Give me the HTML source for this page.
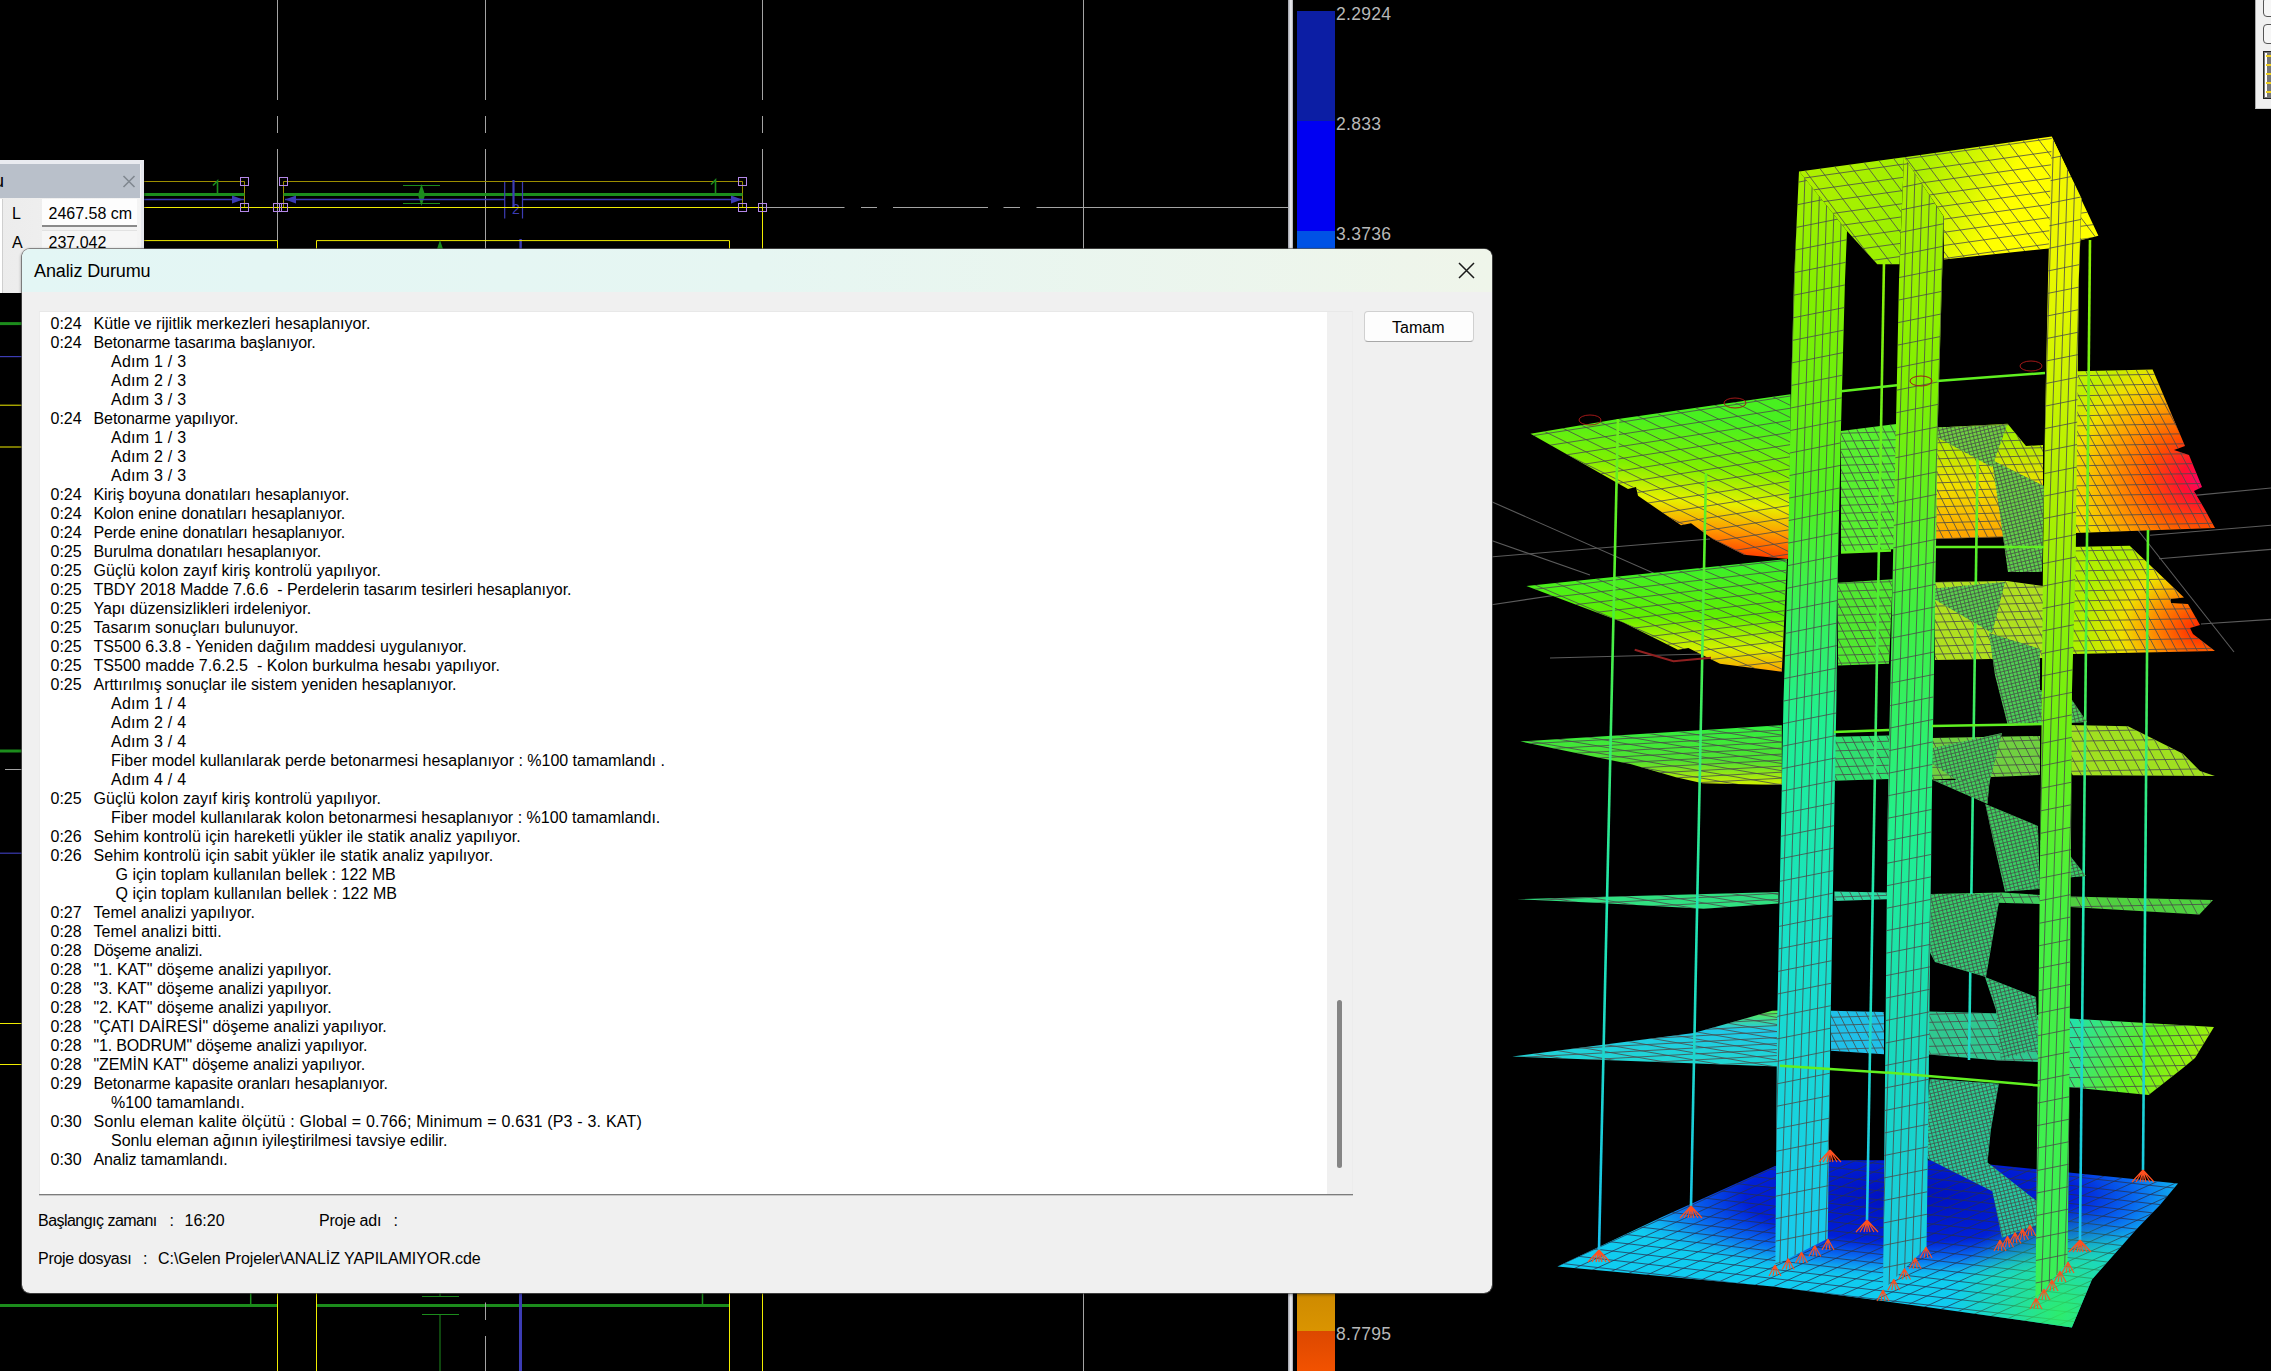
<!DOCTYPE html>
<html><head><meta charset="utf-8"><style>
*{margin:0;padding:0;box-sizing:border-box}
html,body{width:2271px;height:1371px;overflow:hidden;background:#000}
body{position:relative;font-family:"Liberation Sans",sans-serif;font-size:16px;color:#000}
.abs{position:absolute}
.ln{position:absolute;line-height:19px;white-space:pre;font-size:16px;color:#000}
svg{position:absolute;left:0;top:0}
</style></head>
<body>
<svg width="2271" height="1371" viewBox="0 0 2271 1371" style="left:0;top:0"><line x1="277.5" y1="0" x2="277.5" y2="100" stroke="#a4a4a4" stroke-width="1"/><line x1="277.5" y1="116" x2="277.5" y2="133" stroke="#a4a4a4" stroke-width="1"/><line x1="277.5" y1="149" x2="277.5" y2="249" stroke="#a4a4a4" stroke-width="1"/><line x1="485.5" y1="0" x2="485.5" y2="100" stroke="#a4a4a4" stroke-width="1"/><line x1="485.5" y1="116" x2="485.5" y2="133" stroke="#a4a4a4" stroke-width="1"/><line x1="485.5" y1="149" x2="485.5" y2="249" stroke="#a4a4a4" stroke-width="1"/><line x1="762.5" y1="0" x2="762.5" y2="100" stroke="#a4a4a4" stroke-width="1"/><line x1="762.5" y1="116" x2="762.5" y2="133" stroke="#a4a4a4" stroke-width="1"/><line x1="762.5" y1="149" x2="762.5" y2="207.5" stroke="#a4a4a4" stroke-width="1"/><line x1="1083.5" y1="0" x2="1083.5" y2="249" stroke="#a4a4a4" stroke-width="1"/><line x1="762" y1="207.5" x2="844.5" y2="207.5" stroke="#a4a4a4" stroke-width="1"/><line x1="861" y1="207.5" x2="877" y2="207.5" stroke="#a4a4a4" stroke-width="1"/><line x1="893" y1="207.5" x2="988" y2="207.5" stroke="#a4a4a4" stroke-width="1"/><line x1="1003.5" y1="207.5" x2="1020" y2="207.5" stroke="#a4a4a4" stroke-width="1"/><line x1="1036.5" y1="207.5" x2="1288" y2="207.5" stroke="#a4a4a4" stroke-width="1"/><line x1="143" y1="181.5" x2="244.5" y2="181.5" stroke="#9c8e00" stroke-width="1"/><line x1="283.5" y1="181.5" x2="742.5" y2="181.5" stroke="#9c8e00" stroke-width="1"/><line x1="244.5" y1="181.5" x2="244.5" y2="207.5" stroke="#9c8e00" stroke-width="1"/><line x1="283.5" y1="181.5" x2="283.5" y2="207.5" stroke="#9c8e00" stroke-width="1"/><line x1="742.5" y1="181.5" x2="742.5" y2="207.5" stroke="#9c8e00" stroke-width="1"/><line x1="143" y1="194.5" x2="244.5" y2="194.5" stroke="#1c8c1c" stroke-width="3"/><line x1="283.5" y1="194.5" x2="742.5" y2="194.5" stroke="#1c8c1c" stroke-width="3"/><path d="M213 185.5L217.5 181V194M711 184.5L715.5 180V194" stroke="#1c8c1c" stroke-width="1.6" fill="none"/><path d="M421.5 184 L425 195 L421.5 206 L418 195 Z" fill="#1c8c1c"/><line x1="403" y1="185.5" x2="440" y2="185.5" stroke="#1c8c1c" stroke-width="1"/><line x1="403" y1="203.5" x2="440" y2="203.5" stroke="#1c8c1c" stroke-width="1"/><line x1="143" y1="199.5" x2="244" y2="199.5" stroke="#3c3cb4" stroke-width="1.5"/><line x1="285" y1="199.5" x2="505" y2="199.5" stroke="#3c3cb4" stroke-width="1.5"/><line x1="522.5" y1="199.5" x2="742" y2="199.5" stroke="#3c3cb4" stroke-width="1.5"/><path d="M232 195.5 L243 199.5 L232 203.5 Z" fill="#3c3cb4"/><path d="M296 195.5 L285 199.5 L296 203.5 Z" fill="#3c3cb4"/><path d="M731 195.5 L742 199.5 L731 203.5 Z" fill="#3c3cb4"/><line x1="504.7" y1="182" x2="504.7" y2="218.5" stroke="#3c3cb4" stroke-width="1.2"/><line x1="522.5" y1="182" x2="522.5" y2="218.5" stroke="#3c3cb4" stroke-width="1.2"/><line x1="513.5" y1="180" x2="513.5" y2="207" stroke="#3c3cb4" stroke-width="2.2"/><text x="512" y="214" font-family="Liberation Sans" font-size="14" fill="#3c3cb4">2</text><line x1="520.6" y1="239" x2="520.6" y2="249" stroke="#3c3cb4" stroke-width="2.5"/><line x1="143" y1="207.5" x2="762.5" y2="207.5" stroke="#f0ec00" stroke-width="1"/><line x1="762.5" y1="207.5" x2="762.5" y2="249" stroke="#f0ec00" stroke-width="1"/><line x1="143" y1="240.6" x2="277.5" y2="240.6" stroke="#f0ec00" stroke-width="1"/><line x1="277.5" y1="240.6" x2="277.5" y2="249" stroke="#f0ec00" stroke-width="1"/><line x1="316.5" y1="240.6" x2="729.5" y2="240.6" stroke="#f0ec00" stroke-width="1"/><line x1="316.5" y1="240.6" x2="316.5" y2="249" stroke="#f0ec00" stroke-width="1"/><line x1="729.5" y1="240.6" x2="729.5" y2="249" stroke="#f0ec00" stroke-width="1"/><path d="M440 240 L443 249 L437 249 Z" fill="#1c8c1c"/><rect x="240.5" y="177.5" width="8" height="8" fill="none" stroke="#b488e8" stroke-width="1"/><rect x="240.5" y="203.5" width="8" height="8" fill="none" stroke="#b488e8" stroke-width="1"/><rect x="279.5" y="177.5" width="8" height="8" fill="none" stroke="#b488e8" stroke-width="1"/><rect x="279.5" y="203.5" width="8" height="8" fill="none" stroke="#b488e8" stroke-width="1"/><rect x="273.5" y="203.5" width="8" height="8" fill="none" stroke="#b488e8" stroke-width="1"/><rect x="738.5" y="177.5" width="8" height="8" fill="none" stroke="#b488e8" stroke-width="1"/><rect x="738.5" y="203.5" width="8" height="8" fill="none" stroke="#b488e8" stroke-width="1"/><rect x="758.5" y="203.5" width="8" height="8" fill="none" stroke="#b488e8" stroke-width="1"/><line x1="0" y1="323.6" x2="22" y2="323.6" stroke="#1c8c1c" stroke-width="3"/><line x1="0" y1="356.6" x2="22" y2="356.6" stroke="#3c3cb4" stroke-width="1.2"/><line x1="0" y1="405.2" x2="22" y2="405.2" stroke="#f0ec00" stroke-width="1"/><line x1="0" y1="447" x2="22" y2="447" stroke="#f0ec00" stroke-width="1"/><line x1="0" y1="751" x2="22" y2="751" stroke="#1c8c1c" stroke-width="3"/><line x1="0" y1="853.2" x2="22" y2="853.2" stroke="#3c3cb4" stroke-width="1.2"/><line x1="0" y1="1023.5" x2="22" y2="1023.5" stroke="#f0ec00" stroke-width="1"/><line x1="0" y1="1064.5" x2="22" y2="1064.5" stroke="#f0ec00" stroke-width="1"/><line x1="5" y1="769.5" x2="22" y2="769.5" stroke="#a4a4a4" stroke-width="1"/><line x1="0" y1="1305.5" x2="277.5" y2="1305.5" stroke="#1c8c1c" stroke-width="3"/><line x1="316" y1="1305.5" x2="730" y2="1305.5" stroke="#1c8c1c" stroke-width="3"/><line x1="250.7" y1="1293" x2="250.7" y2="1305" stroke="#1c8c1c" stroke-width="1.5"/><line x1="702.5" y1="1293" x2="702.5" y2="1305" stroke="#1c8c1c" stroke-width="1.5"/><line x1="277.5" y1="1293" x2="277.5" y2="1371" stroke="#f0ec00" stroke-width="1"/><line x1="316.5" y1="1293" x2="316.5" y2="1371" stroke="#f0ec00" stroke-width="1"/><line x1="729.5" y1="1293" x2="729.5" y2="1371" stroke="#f0ec00" stroke-width="1"/><line x1="762.5" y1="1293" x2="762.5" y2="1371" stroke="#f0ec00" stroke-width="1"/><line x1="440" y1="1314" x2="440" y2="1371" stroke="#1c8c1c" stroke-width="1"/><line x1="422" y1="1296.5" x2="459" y2="1296.5" stroke="#1c8c1c" stroke-width="1"/><line x1="422" y1="1314.5" x2="459" y2="1314.5" stroke="#1c8c1c" stroke-width="1"/><line x1="440" y1="1293" x2="440" y2="1297" stroke="#1c8c1c" stroke-width="1"/><line x1="485.5" y1="1302.5" x2="485.5" y2="1320" stroke="#a4a4a4" stroke-width="1"/><line x1="485.5" y1="1336" x2="485.5" y2="1371" stroke="#a4a4a4" stroke-width="1"/><line x1="520.5" y1="1293" x2="520.5" y2="1371" stroke="#3c3cb4" stroke-width="3"/><line x1="1083.5" y1="1293" x2="1083.5" y2="1371" stroke="#a4a4a4" stroke-width="1"/><defs><linearGradient id="gWallL" gradientUnits="userSpaceOnUse" x1="0" y1="170" x2="0" y2="1270"><stop offset="0" stop-color="#a8f000"/><stop offset="0.12" stop-color="#80f000"/><stop offset="0.3" stop-color="#50f020"/><stop offset="0.5" stop-color="#20f090"/><stop offset="0.7" stop-color="#18e0c8"/><stop offset="1" stop-color="#18c8f0"/></linearGradient><linearGradient id="gWallM" gradientUnits="userSpaceOnUse" x1="0" y1="157" x2="0" y2="1290"><stop offset="0" stop-color="#b0f000"/><stop offset="0.2" stop-color="#80f000"/><stop offset="0.4" stop-color="#40f040"/><stop offset="0.6" stop-color="#20f090"/><stop offset="0.8" stop-color="#18d8c0"/><stop offset="1" stop-color="#18c8e8"/></linearGradient><linearGradient id="gWallR" gradientUnits="userSpaceOnUse" x1="0" y1="137" x2="0" y2="1298"><stop offset="0" stop-color="#f8f800"/><stop offset="0.12" stop-color="#e8f800"/><stop offset="0.3" stop-color="#b0f000"/><stop offset="0.5" stop-color="#70f010"/><stop offset="0.66" stop-color="#48f040"/><stop offset="1" stop-color="#38f058"/></linearGradient><linearGradient id="gS5L" gradientUnits="userSpaceOnUse" x1="1700" y1="420" x2="1690" y2="556"><stop offset="0" stop-color="#48f020"/><stop offset="0.35" stop-color="#80f000"/><stop offset="0.6" stop-color="#e8f000"/><stop offset="0.8" stop-color="#ff9800"/><stop offset="1" stop-color="#ff3000"/></linearGradient><radialGradient id="gS5R" gradientUnits="userSpaceOnUse" cx="2205" cy="480" r="160" gradientTransform="translate(2205 480) scale(1 0.85) translate(-2205 -480)"><stop offset="0" stop-color="#ff0070"/><stop offset="0.15" stop-color="#ff1030"/><stop offset="0.35" stop-color="#ff5000"/><stop offset="0.6" stop-color="#ffa000"/><stop offset="0.82" stop-color="#f0e000"/><stop offset="1" stop-color="#c0f000"/></radialGradient><linearGradient id="gS5M" gradientUnits="userSpaceOnUse" x1="1930" y1="430" x2="1930" y2="540"><stop offset="0" stop-color="#a0f000"/><stop offset="0.5" stop-color="#f0e000"/><stop offset="1" stop-color="#ffa000"/></linearGradient><linearGradient id="gS4L" gradientUnits="userSpaceOnUse" x1="1650" y1="560" x2="1650" y2="672"><stop offset="0" stop-color="#38f030"/><stop offset="0.5" stop-color="#60f000"/><stop offset="0.8" stop-color="#d8f000"/><stop offset="1" stop-color="#ffa000"/></linearGradient><radialGradient id="gS4R" gradientUnits="userSpaceOnUse" cx="2200" cy="630" r="120" gradientTransform="translate(2200 630) scale(1 0.8) translate(-2200 -630)"><stop offset="0" stop-color="#ff2000"/><stop offset="0.35" stop-color="#ff8000"/><stop offset="0.65" stop-color="#f0e000"/><stop offset="1" stop-color="#b0f000"/></radialGradient><linearGradient id="gS3" gradientUnits="userSpaceOnUse" x1="1650" y1="725" x2="1650" y2="785"><stop offset="0" stop-color="#30f040"/><stop offset="0.6" stop-color="#50e030"/><stop offset="1" stop-color="#d0f000"/></linearGradient><linearGradient id="gS1L" gradientUnits="userSpaceOnUse" x1="1650" y1="1010" x2="1650" y2="1066"><stop offset="0" stop-color="#60f040"/><stop offset="0.35" stop-color="#20c8e8"/><stop offset="1" stop-color="#20d8d0"/></linearGradient><linearGradient id="gS1R" gradientUnits="userSpaceOnUse" x1="2070" y1="1018" x2="2210" y2="1095"><stop offset="0" stop-color="#20e0b0"/><stop offset="0.5" stop-color="#60f020"/><stop offset="1" stop-color="#c0f000"/></linearGradient><radialGradient id="gBase" gradientUnits="userSpaceOnUse" cx="1910" cy="1195" r="300" gradientTransform="translate(1910 1195) scale(1 0.28) translate(-1910 -1195)"><stop offset="0" stop-color="#0010c0"/><stop offset="0.55" stop-color="#0020d8"/><stop offset="0.75" stop-color="#0868f0"/><stop offset="0.9" stop-color="#10b0f0"/><stop offset="1" stop-color="#10ccf0"/></radialGradient><linearGradient id="gCol" gradientUnits="userSpaceOnUse" x1="0" y1="230" x2="0" y2="1260"><stop offset="0" stop-color="#90f000"/><stop offset="0.35" stop-color="#50f030"/><stop offset="0.65" stop-color="#20e8b0"/><stop offset="1" stop-color="#18c0f0"/></linearGradient><linearGradient id="gRoofL" gradientUnits="userSpaceOnUse" x1="1800" y1="170" x2="1900" y2="260"><stop offset="0" stop-color="#b0f000"/><stop offset="1" stop-color="#98f000"/></linearGradient><linearGradient id="gRoofR" gradientUnits="userSpaceOnUse" x1="1920" y1="160" x2="2090" y2="240"><stop offset="0" stop-color="#a8f000"/><stop offset="0.3" stop-color="#d8f800"/><stop offset="0.5" stop-color="#ffff00"/><stop offset="1" stop-color="#ffff00"/></linearGradient><linearGradient id="gStair" gradientUnits="userSpaceOnUse" x1="0" y1="420" x2="0" y2="1280"><stop offset="0" stop-color="#70d040"/><stop offset="0.5" stop-color="#38d060"/><stop offset="1" stop-color="#20c8b0"/></linearGradient></defs><line x1="1490" y1="501" x2="1760" y2="620" stroke="#5c5c5c" stroke-width="1.1" /><line x1="1490" y1="540" x2="1590" y2="575" stroke="#5c5c5c" stroke-width="1.1" /><line x1="1490" y1="557" x2="1710" y2="539" stroke="#5c5c5c" stroke-width="1.1" /><line x1="1490" y1="605" x2="1590" y2="590" stroke="#5c5c5c" stroke-width="1.1" /><line x1="2192" y1="495.6" x2="2271" y2="488" stroke="#5c5c5c" stroke-width="1.1" /><line x1="2150" y1="535.3" x2="2271" y2="525.3" stroke="#5c5c5c" stroke-width="1.1" /><line x1="2159" y1="558.7" x2="2271" y2="549.4" stroke="#5c5c5c" stroke-width="1.1" /><line x1="2201" y1="624" x2="2271" y2="619.4" stroke="#5c5c5c" stroke-width="1.1" /><line x1="2130" y1="520" x2="2234" y2="652" stroke="#5c5c5c" stroke-width="1.1" /><line x1="1550" y1="658" x2="1780" y2="652" stroke="#5c5c5c" stroke-width="1.1" /><polygon points="1557.4,1266.4 1662,1217 1775,1166 1827.7,1160.3 1946.9,1160.3 2034,1169 2178,1183.6 2160,1205 2135.8,1230 2092,1279.5 2071.8,1327.4 1883,1301 1775.4,1286.8" fill="url(#gBase)" /><clipPath id="c1"><polygon points="1557.4,1266.4 1662,1217 1775,1166 1827.7,1160.3 1946.9,1160.3 2034,1169 2178,1183.6 2160,1205 2135.8,1230 2092,1279.5 2071.8,1327.4 1883,1301 1775.4,1286.8"/></clipPath><path clip-path="url(#c1)" d="M1439.3 1082.7L2028.0 815.1M1443.0 1090.9L2031.7 823.3M1446.7 1099.1L2035.4 831.5M1450.4 1107.3L2039.2 839.7M1454.2 1115.5L2042.9 847.9M1457.9 1123.7L2046.6 856.1M1461.6 1131.9L2050.3 864.2M1465.3 1140.0L2054.1 872.4M1469.1 1148.2L2057.8 880.6M1472.8 1156.4L2061.5 888.8M1476.5 1164.6L2065.2 897.0M1480.2 1172.8L2069.0 905.2M1484.0 1181.0L2072.7 913.4M1487.7 1189.2L2076.4 921.6M1491.4 1197.4L2080.1 929.8M1495.1 1205.6L2083.9 938.0M1498.8 1213.8L2087.6 946.2M1502.6 1222.0L2091.3 954.4M1506.3 1230.2L2095.0 962.6M1510.0 1238.4L2098.8 970.8M1513.7 1246.6L2102.5 979.0M1517.5 1254.8L2106.2 987.1M1521.2 1262.9L2109.9 995.3M1524.9 1271.1L2113.7 1003.5M1528.6 1279.3L2117.4 1011.7M1532.4 1287.5L2121.1 1019.9M1536.1 1295.7L2124.8 1028.1M1539.8 1303.9L2128.6 1036.3M1543.5 1312.1L2132.3 1044.5M1547.3 1320.3L2136.0 1052.7M1551.0 1328.5L2139.7 1060.9M1554.7 1336.7L2143.4 1069.1M1558.4 1344.9L2147.2 1077.3M1562.2 1353.1L2150.9 1085.5M1565.9 1361.3L2154.6 1093.7M1569.6 1369.5L2158.3 1101.9M1573.3 1377.7L2162.1 1110.0M1577.1 1385.8L2165.8 1118.2M1580.8 1394.0L2169.5 1126.4M1584.5 1402.2L2173.2 1134.6M1588.2 1410.4L2177.0 1142.8M1592.0 1418.6L2180.7 1151.0M1595.7 1426.8L2184.4 1159.2M1599.4 1435.0L2188.1 1167.4M1603.1 1443.2L2191.9 1175.6M1606.8 1451.4L2195.6 1183.8M1610.6 1459.6L2199.3 1192.0M1614.3 1467.8L2203.0 1200.2M1618.0 1476.0L2206.8 1208.4M1621.7 1484.2L2210.5 1216.6M1625.5 1492.4L2214.2 1224.8M1629.2 1500.6L2217.9 1232.9M1632.9 1508.7L2221.7 1241.1M1636.6 1516.9L2225.4 1249.3M1640.4 1525.1L2229.1 1257.5M1644.1 1533.3L2232.8 1265.7M1647.8 1541.5L2236.6 1273.9M1651.5 1549.7L2240.3 1282.1M1655.3 1557.9L2244.0 1290.3M1659.0 1566.1L2247.7 1298.5M1662.7 1574.3L2251.4 1306.7M1666.4 1582.5L2255.2 1314.9M1670.2 1590.7L2258.9 1323.1M1673.9 1598.9L2262.6 1331.3M1677.6 1607.1L2266.3 1339.5M1681.3 1615.3L2270.1 1347.7M1685.1 1623.5L2273.8 1355.8M1688.8 1631.6L2277.5 1364.0M1692.5 1639.8L2281.2 1372.2M1696.2 1648.0L2285.0 1380.4M1700.0 1656.2L2288.7 1388.6M1703.7 1664.4L2292.4 1396.8M1707.4 1672.6L2296.1 1405.0M1583.0 885.4L2225.6 958.4M1582.0 894.4L2224.6 967.4M1581.0 903.3L2223.5 976.3M1580.0 912.2L2222.5 985.3M1578.9 921.2L2221.5 994.2M1577.9 930.1L2220.5 1003.1M1576.9 939.1L2219.5 1012.1M1575.9 948.0L2218.5 1021.0M1574.9 957.0L2217.4 1030.0M1573.9 965.9L2216.4 1038.9M1572.8 974.8L2215.4 1047.9M1571.8 983.8L2214.4 1056.8M1570.8 992.7L2213.4 1065.7M1569.8 1001.7L2212.4 1074.7M1568.8 1010.6L2211.3 1083.6M1567.8 1019.5L2210.3 1092.6M1566.7 1028.5L2209.3 1101.5M1565.7 1037.4L2208.3 1110.5M1564.7 1046.4L2207.3 1119.4M1563.7 1055.3L2206.3 1128.3M1562.7 1064.3L2205.2 1137.3M1561.7 1073.2L2204.2 1146.2M1560.6 1082.1L2203.2 1155.2M1559.6 1091.1L2202.2 1164.1M1558.6 1100.0L2201.2 1173.1M1557.6 1109.0L2200.2 1182.0M1556.6 1117.9L2199.1 1190.9M1555.6 1126.9L2198.1 1199.9M1554.5 1135.8L2197.1 1208.8M1553.5 1144.7L2196.1 1217.8M1552.5 1153.7L2195.1 1226.7M1551.5 1162.6L2194.1 1235.6M1550.5 1171.6L2193.0 1244.6M1549.5 1180.5L2192.0 1253.5M1548.4 1189.5L2191.0 1262.5M1547.4 1198.4L2190.0 1271.4M1546.4 1207.3L2189.0 1280.4M1545.4 1216.3L2188.0 1289.3M1544.4 1225.2L2187.0 1298.2M1543.4 1234.2L2185.9 1307.2M1542.4 1243.1L2184.9 1316.1M1541.3 1252.1L2183.9 1325.1M1540.3 1261.0L2182.9 1334.0M1539.3 1269.9L2181.9 1343.0M1538.3 1278.9L2180.9 1351.9M1537.3 1287.8L2179.8 1360.8M1536.3 1296.8L2178.8 1369.8M1535.2 1305.7L2177.8 1378.7M1534.2 1314.6L2176.8 1387.7M1533.2 1323.6L2175.8 1396.6M1532.2 1332.5L2174.8 1405.6M1531.2 1341.5L2173.7 1414.5M1530.2 1350.4L2172.7 1423.4M1529.1 1359.4L2171.7 1432.4M1528.1 1368.3L2170.7 1441.3M1527.1 1377.2L2169.7 1450.3M1526.1 1386.2L2168.7 1459.2M1525.1 1395.1L2167.6 1468.2M1524.1 1404.1L2166.6 1477.1M1523.0 1413.0L2165.6 1486.0M1522.0 1422.0L2164.6 1495.0M1521.0 1430.9L2163.6 1503.9M1520.0 1439.8L2162.6 1512.9M1519.0 1448.8L2161.5 1521.8M1518.0 1457.7L2160.5 1530.7M1516.9 1466.7L2159.5 1539.7M1515.9 1475.6L2158.5 1548.6M1514.9 1484.6L2157.5 1557.6M1513.9 1493.5L2156.5 1566.5M1512.9 1502.4L2155.4 1575.5M1511.9 1511.4L2154.4 1584.4M1510.8 1520.3L2153.4 1593.3M1509.8 1529.3L2152.4 1602.3" stroke="#283050" stroke-width="0.9" stroke-opacity="0.85" fill="none"/><radialGradient id="gBaseG" gradientUnits="userSpaceOnUse" cx="2060" cy="1315" r="110"><stop offset="0" stop-color="#30f060" stop-opacity="0.9"/><stop offset="1" stop-color="#30f060" stop-opacity="0"/></radialGradient><polygon points="1557.4,1266.4 1662,1217 1775,1166 1827.7,1160.3 1946.9,1160.3 2034,1169 2178,1183.6 2160,1205 2135.8,1230 2092,1279.5 2071.8,1327.4 1883,1301 1775.4,1286.8" fill="url(#gBaseG)" /><polygon points="1512.3,1056.6 1693.7,1033.1 1740,1020 1772.1,1010.8 1790,1010 1777.4,1066.6" fill="url(#gS1L)" /><clipPath id="c2"><polygon points="1512.3,1056.6 1693.7,1033.1 1740,1020 1772.1,1010.8 1790,1010 1777.4,1066.6"/></clipPath><path clip-path="url(#c2)" d="M1499.9 902.2L1786.9 886.8M1500.2 908.2L1787.2 892.8M1500.6 914.2L1787.5 898.8M1500.9 920.2L1787.9 904.8M1501.2 926.2L1788.2 910.7M1501.5 932.2L1788.5 916.7M1501.8 938.2L1788.8 922.7M1502.2 944.2L1789.2 928.7M1502.5 950.2L1789.5 934.7M1502.8 956.2L1789.8 940.7M1503.1 962.1L1790.1 946.7M1503.5 968.1L1790.5 952.7M1503.8 974.1L1790.8 958.7M1504.1 980.1L1791.1 964.7M1504.4 986.1L1791.4 970.7M1504.7 992.1L1791.7 976.7M1505.1 998.1L1792.1 982.6M1505.4 1004.1L1792.4 988.6M1505.7 1010.1L1792.7 994.6M1506.0 1016.1L1793.0 1000.6M1506.4 1022.1L1793.4 1006.6M1506.7 1028.1L1793.7 1012.6M1507.0 1034.0L1794.0 1018.6M1507.3 1040.0L1794.3 1024.6M1507.7 1046.0L1794.6 1030.6M1508.0 1052.0L1795.0 1036.6M1508.3 1058.0L1795.3 1042.6M1508.6 1064.0L1795.6 1048.5M1508.9 1070.0L1795.9 1054.5M1509.3 1076.0L1796.3 1060.5M1509.6 1082.0L1796.6 1066.5M1509.9 1088.0L1796.9 1072.5M1510.2 1094.0L1797.2 1078.5M1510.6 1099.9L1797.6 1084.5M1510.9 1105.9L1797.9 1090.5M1511.2 1111.9L1798.2 1096.5M1511.5 1117.9L1798.5 1102.5M1511.8 1123.9L1798.8 1108.5M1512.2 1129.9L1799.2 1114.5M1512.5 1135.9L1799.5 1120.4M1512.8 1141.9L1799.8 1126.4M1513.1 1147.9L1800.1 1132.4M1513.5 1153.9L1800.5 1138.4M1513.8 1159.9L1800.8 1144.4M1514.1 1165.9L1801.1 1150.4M1514.4 1171.8L1801.4 1156.4M1514.8 1177.8L1801.7 1162.4M1515.1 1183.8L1802.1 1168.4M1515.4 1189.8L1802.4 1174.4M1534.6 868.9L1817.8 918.0M1533.4 875.8L1816.6 924.9M1532.2 882.7L1815.4 931.8M1531.0 889.6L1814.2 938.7M1529.8 896.5L1813.0 945.6M1528.7 903.4L1811.9 952.4M1527.5 910.3L1810.7 959.3M1526.3 917.2L1809.5 966.2M1525.1 924.1L1808.3 973.1M1523.9 931.0L1807.1 980.0M1522.7 937.9L1805.9 986.9M1521.5 944.8L1804.7 993.8M1520.3 951.7L1803.5 1000.7M1519.1 958.6L1802.3 1007.6M1517.9 965.5L1801.1 1014.5M1516.7 972.4L1799.9 1021.4M1515.5 979.3L1798.7 1028.3M1514.3 986.2L1797.5 1035.2M1513.1 993.1L1796.3 1042.1M1511.9 1000.0L1795.1 1049.0M1510.7 1006.9L1793.9 1055.9M1509.6 1013.8L1792.7 1062.8M1508.4 1020.7L1791.6 1069.7M1507.2 1027.6L1790.4 1076.6M1506.0 1034.5L1789.2 1083.5M1504.8 1041.4L1788.0 1090.4M1503.6 1048.3L1786.8 1097.3M1502.4 1055.2L1785.6 1104.2M1501.2 1062.1L1784.4 1111.1M1500.0 1069.0L1783.2 1118.0M1498.8 1075.9L1782.0 1124.9M1497.6 1082.8L1780.8 1131.8M1496.4 1089.7L1779.6 1138.7M1495.2 1096.6L1778.4 1145.6M1494.0 1103.5L1777.2 1152.5M1492.8 1110.4L1776.0 1159.4M1491.6 1117.3L1774.8 1166.3M1490.4 1124.2L1773.6 1173.2M1489.3 1131.0L1772.5 1180.1M1488.1 1137.9L1771.3 1187.0M1486.9 1144.8L1770.1 1193.9M1485.7 1151.7L1768.9 1200.8M1484.5 1158.6L1767.7 1207.7" stroke="#4a4a4a" stroke-width="0.9" stroke-opacity="0.9" fill="none"/><polygon points="1831,1010.8 1884,1012 1884,1054.3 1831,1050.8" fill="#20c0e8" /><clipPath id="c3"><polygon points="1831,1010.8 1884,1012 1884,1054.3 1831,1050.8"/></clipPath><path clip-path="url(#c3)" d="M1820.0 993.7L1892.6 991.5M1820.3 1001.7L1892.8 999.5M1820.5 1009.6L1893.0 1007.5M1820.8 1017.6L1893.3 1015.5M1821.0 1025.6L1893.5 1023.5M1821.2 1033.6L1893.8 1031.5M1821.5 1041.6L1894.0 1039.5M1821.7 1049.6L1894.2 1047.5M1822.0 1057.6L1894.5 1055.5M1822.2 1065.6L1894.7 1063.4M1822.4 1073.6L1895.0 1071.4M1877.1 982.2L1909.5 1047.1M1869.9 985.8L1902.3 1050.7M1862.7 989.4L1895.2 1054.3M1855.6 992.9L1888.0 1057.8M1848.4 996.5L1880.9 1061.4M1841.3 1000.1L1873.7 1065.0M1834.1 1003.7L1866.6 1068.6M1827.0 1007.3L1859.4 1072.2M1819.8 1010.8L1852.3 1075.7M1812.7 1014.4L1845.1 1079.3M1805.5 1018.0L1837.9 1082.9" stroke="#4a4a4a" stroke-width="0.9" stroke-opacity="0.9" fill="none"/><polygon points="1929,1011.5 1993.6,1013.2 2040,1015 2040,1062 1998.8,1060.6 1929,1054.6" fill="#30c890" /><clipPath id="c4"><polygon points="1929,1011.5 1993.6,1013.2 2040,1015 2040,1062 1998.8,1060.6 1929,1054.6"/></clipPath><path clip-path="url(#c4)" d="M1919.6 974.7L2045.5 970.9M1919.9 982.7L2045.8 978.9M1920.1 990.7L2046.0 986.9M1920.4 998.7L2046.2 994.9M1920.6 1006.7L2046.5 1002.9M1920.8 1014.6L2046.7 1010.9M1921.1 1022.6L2047.0 1018.9M1921.3 1030.6L2047.2 1026.9M1921.6 1038.6L2047.4 1034.9M1921.8 1046.6L2047.7 1042.9M1922.0 1054.6L2047.9 1050.9M1922.3 1062.6L2048.2 1058.9M1922.5 1070.6L2048.4 1066.8M1922.8 1078.6L2048.6 1074.8M1923.0 1086.6L2048.9 1082.8M1923.2 1094.6L2049.1 1090.8M1923.5 1102.6L2049.4 1098.8M2013.6 951.8L2069.9 1064.5M2006.4 955.4L2062.8 1068.0M1999.3 959.0L2055.6 1071.6M1992.1 962.5L2048.4 1075.2M1985.0 966.1L2041.3 1078.8M1977.8 969.7L2034.1 1082.3M1970.6 973.3L2027.0 1085.9M1963.5 976.8L2019.8 1089.5M1956.3 980.4L2012.7 1093.1M1949.2 984.0L2005.5 1096.7M1942.0 987.6L1998.4 1100.2M1934.9 991.2L1991.2 1103.8M1927.7 994.7L1984.0 1107.4M1920.6 998.3L1976.9 1111.0M1913.4 1001.9L1969.7 1114.5M1906.2 1005.5L1962.6 1118.1M1899.1 1009.0L1955.4 1121.7" stroke="#4a4a4a" stroke-width="0.9" stroke-opacity="0.9" fill="none"/><polygon points="2069.4,1018.4 2214,1027 2195,1058 2183,1068 2148.6,1095 2045.3,1084.7 2045,1018" fill="url(#gS1R)" /><clipPath id="c5"><polygon points="2069.4,1018.4 2214,1027 2195,1058 2183,1068 2148.6,1095 2045.3,1084.7 2045,1018"/></clipPath><path clip-path="url(#c5)" d="M2032.8 958.3L2222.4 954.7M2032.9 968.3L2222.6 964.7M2033.1 978.3L2222.8 974.7M2033.3 988.3L2223.0 984.7M2033.5 998.3L2223.2 994.7M2033.7 1008.3L2223.4 1004.7M2033.9 1018.3L2223.6 1014.7M2034.1 1028.3L2223.8 1024.7M2034.3 1038.3L2224.0 1034.7M2034.5 1048.3L2224.1 1044.7M2034.7 1058.3L2224.3 1054.7M2034.9 1068.3L2224.5 1064.7M2035.0 1078.3L2224.7 1074.7M2035.2 1088.3L2224.9 1084.7M2035.4 1098.3L2225.1 1094.7M2035.6 1108.3L2225.3 1104.7M2035.8 1118.3L2225.5 1114.7M2036.0 1128.3L2225.7 1124.7M2036.2 1138.3L2225.9 1134.7M2036.4 1148.3L2226.1 1144.7M2036.6 1158.3L2226.2 1154.7M2172.2 926.2L2261.5 1093.6M2164.3 930.4L2253.6 1097.8M2156.3 934.7L2245.6 1102.1M2148.4 938.9L2237.7 1106.3M2140.4 943.2L2229.7 1110.6M2132.5 947.4L2221.8 1114.8M2124.6 951.6L2213.8 1119.0M2116.6 955.9L2205.9 1123.3M2108.7 960.1L2198.0 1127.5M2100.7 964.3L2190.0 1131.7M2092.8 968.6L2182.1 1136.0M2084.9 972.8L2174.1 1140.2M2076.9 977.0L2166.2 1144.4M2069.0 981.3L2158.3 1148.7M2061.0 985.5L2150.3 1152.9M2053.1 989.7L2142.4 1157.1M2045.2 994.0L2134.4 1161.4M2037.2 998.2L2126.5 1165.6M2029.3 1002.4L2118.6 1169.8M2021.3 1006.7L2110.6 1174.1M2013.4 1010.9L2102.7 1178.3M2005.4 1015.2L2094.7 1182.6M1997.5 1019.4L2086.8 1186.8" stroke="#4a4a4a" stroke-width="0.9" stroke-opacity="0.9" fill="none"/><polygon points="1517,899.2 1778.4,892 1778.4,903.6 1703.7,908.7 1600,903" fill="#30e080" /><clipPath id="c6"><polygon points="1517,899.2 1778.4,892 1778.4,903.6 1703.7,908.7 1600,903"/></clipPath><path clip-path="url(#c6)" d="M1507.5 769.7L1773.1 755.4M1507.8 775.7L1773.4 761.4M1508.2 781.7L1773.7 767.4M1508.5 787.7L1774.0 773.4M1508.8 793.7L1774.3 779.4M1509.1 799.7L1774.7 785.4M1509.4 805.6L1775.0 791.3M1509.8 811.6L1775.3 797.3M1510.1 817.6L1775.6 803.3M1510.4 823.6L1776.0 809.3M1510.7 829.6L1776.3 815.3M1511.1 835.6L1776.6 821.3M1511.4 841.6L1776.9 827.3M1511.7 847.6L1777.2 833.3M1512.0 853.6L1777.6 839.3M1512.3 859.6L1777.9 845.3M1512.7 865.6L1778.2 851.3M1513.0 871.6L1778.5 857.3M1513.3 877.5L1778.9 863.2M1513.6 883.5L1779.2 869.2M1514.0 889.5L1779.5 875.2M1514.3 895.5L1779.8 881.2M1514.6 901.5L1780.2 887.2M1514.9 907.5L1780.5 893.2M1515.2 913.5L1780.8 899.2M1515.6 919.5L1781.1 905.2M1515.9 925.5L1781.4 911.2M1516.2 931.5L1781.8 917.2M1516.5 937.5L1782.1 923.2M1516.9 943.4L1782.4 929.1M1517.2 949.4L1782.7 935.1M1517.5 955.4L1783.1 941.1M1517.8 961.4L1783.4 947.1M1518.2 967.4L1783.7 953.1M1518.5 973.4L1784.0 959.1M1518.8 979.4L1784.3 965.1M1519.1 985.4L1784.7 971.1M1519.4 991.4L1785.0 977.1M1519.8 997.4L1785.3 983.1M1520.1 1003.4L1785.6 989.1M1520.4 1009.4L1786.0 995.1M1520.7 1015.3L1786.3 1001.0M1521.1 1021.3L1786.6 1007.0M1521.4 1027.3L1786.9 1013.0M1521.7 1033.3L1787.2 1019.0M1522.0 1039.3L1787.6 1025.0M1522.3 1045.3L1787.9 1031.0M1539.4 746.6L1801.4 792.0M1538.2 753.5L1800.2 798.9M1537.0 760.4L1799.0 805.8M1535.8 767.3L1797.8 812.7M1534.6 774.2L1796.6 819.6M1533.4 781.1L1795.4 826.5M1532.2 788.0L1794.2 833.4M1531.0 794.9L1793.0 840.3M1529.8 801.8L1791.9 847.2M1528.6 808.7L1790.7 854.1M1527.4 815.6L1789.5 860.9M1526.2 822.5L1788.3 867.8M1525.0 829.4L1787.1 874.7M1523.8 836.3L1785.9 881.6M1522.7 843.2L1784.7 888.5M1521.5 850.1L1783.5 895.4M1520.3 857.0L1782.3 902.3M1519.1 863.9L1781.1 909.2M1517.9 870.8L1779.9 916.1M1516.7 877.7L1778.7 923.0M1515.5 884.6L1777.5 929.9M1514.3 891.5L1776.3 936.8M1513.1 898.4L1775.1 943.7M1511.9 905.3L1773.9 950.6M1510.7 912.2L1772.7 957.5M1509.5 919.1L1771.6 964.4M1508.3 926.0L1770.4 971.3M1507.1 932.9L1769.2 978.2M1505.9 939.8L1768.0 985.1M1504.7 946.6L1766.8 992.0M1503.5 953.5L1765.6 998.9M1502.4 960.4L1764.4 1005.8M1501.2 967.3L1763.2 1012.7M1500.0 974.2L1762.0 1019.6M1498.8 981.1L1760.8 1026.5M1497.6 988.0L1759.6 1033.4M1496.4 994.9L1758.4 1040.3M1495.2 1001.8L1757.2 1047.2M1494.0 1008.7L1756.0 1054.1" stroke="#4a4a4a" stroke-width="0.9" stroke-opacity="0.9" fill="none"/><polygon points="1834.4,891.4 1887,892.4 1887,899.2 1834.4,901" fill="#30d8a0" /><clipPath id="c7"><polygon points="1834.4,891.4 1887,892.4 1887,899.2 1834.4,901"/></clipPath><path clip-path="url(#c7)" d="M1831.0 865.1L1888.5 863.4M1831.3 873.1L1888.7 871.3M1831.5 881.1L1888.9 879.3M1831.7 889.1L1889.2 887.3M1832.0 897.1L1889.4 895.3M1832.2 905.1L1889.7 903.3M1832.5 913.1L1889.9 911.3M1832.7 921.1L1890.1 919.3M1832.9 929.0L1890.4 927.3M1876.5 856.2L1902.2 907.6M1869.3 859.8L1895.0 911.2M1862.2 863.3L1887.9 914.7M1855.0 866.9L1880.7 918.3M1847.8 870.5L1873.6 921.9M1840.7 874.1L1866.4 925.5M1833.5 877.7L1859.2 929.1M1826.4 881.2L1852.1 932.6M1819.2 884.8L1844.9 936.2" stroke="#4a4a4a" stroke-width="0.9" stroke-opacity="0.9" fill="none"/><polygon points="1931,894 2002.5,892.4 2040,895 2040,904 1931,901" fill="#40d060" /><clipPath id="c8"><polygon points="1931,894 2002.5,892.4 2040,895 2040,904 1931,901"/></clipPath><path clip-path="url(#c8)" d="M1926.8 835.9L2040.4 832.5M1927.0 843.9L2040.6 840.5M1927.3 851.9L2040.8 848.5M1927.5 859.9L2041.1 856.5M1927.8 867.9L2041.3 864.5M1928.0 875.9L2041.6 872.5M1928.2 883.9L2041.8 880.5M1928.5 891.9L2042.0 888.5M1928.7 899.9L2042.3 896.5M1929.0 907.9L2042.5 904.5M1929.2 915.9L2042.8 912.5M1929.4 923.9L2043.0 920.5M1929.7 931.9L2043.2 928.5M1929.9 939.9L2043.5 936.5M1930.2 947.9L2043.7 944.5M1930.4 955.9L2044.0 952.5M1930.6 963.9L2044.2 960.5M2017.3 818.8L2068.1 920.4M2010.2 822.3L2061.0 924.0M2003.0 825.9L2053.8 927.5M1995.9 829.5L2046.7 931.1M1988.7 833.1L2039.5 934.7M1981.6 836.7L2032.4 938.3M1974.4 840.2L2025.2 941.9M1967.3 843.8L2018.1 945.4M1960.1 847.4L2010.9 949.0M1952.9 851.0L2003.7 952.6M1945.8 854.5L1996.6 956.2M1938.6 858.1L1989.4 959.7M1931.5 861.7L1982.3 963.3M1924.3 865.3L1975.1 966.9M1917.2 868.9L1968.0 970.5M1910.0 872.4L1960.8 974.1M1902.9 876.0L1953.7 977.6" stroke="#4a4a4a" stroke-width="0.9" stroke-opacity="0.9" fill="none"/><polygon points="2070.4,896.5 2213,900 2199.4,914.5 2070.4,907" fill="#50d040" /><clipPath id="c9"><polygon points="2070.4,896.5 2213,900 2199.4,914.5 2070.4,907"/></clipPath><path clip-path="url(#c9)" d="M2066.3 826.9L2214.0 824.1M2066.5 836.9L2214.2 834.1M2066.7 846.9L2214.4 844.1M2066.9 856.9L2214.6 854.1M2067.1 866.9L2214.8 864.1M2067.3 876.9L2215.0 874.1M2067.5 886.9L2215.2 884.1M2067.7 896.9L2215.4 894.1M2067.8 906.9L2215.6 904.1M2068.0 916.9L2215.7 914.1M2068.2 926.9L2215.9 924.1M2068.4 936.9L2216.1 934.1M2068.6 946.9L2216.3 944.1M2068.8 956.9L2216.5 954.1M2069.0 966.9L2216.7 964.1M2069.2 976.9L2216.9 974.1M2069.4 986.9L2217.1 984.1M2178.4 802.2L2247.9 932.6M2170.5 806.4L2240.0 936.8M2162.5 810.7L2232.0 941.0M2154.6 814.9L2224.1 945.3M2146.6 819.1L2216.2 949.5M2138.7 823.4L2208.2 953.7M2130.8 827.6L2200.3 958.0M2122.8 831.9L2192.3 962.2M2114.9 836.1L2184.4 966.4M2106.9 840.3L2176.5 970.7M2099.0 844.6L2168.5 974.9M2091.1 848.8L2160.6 979.1M2083.1 853.0L2152.6 983.4M2075.2 857.3L2144.7 987.6M2067.2 861.5L2136.8 991.9M2059.3 865.7L2128.8 996.1M2051.4 870.0L2120.9 1000.3M2043.4 874.2L2112.9 1004.6M2035.5 878.4L2105.0 1008.8" stroke="#4a4a4a" stroke-width="0.9" stroke-opacity="0.9" fill="none"/><polygon points="1520.3,741.4 1781.8,725.2 1781.8,785.1 1702.5,783.3 1676,777.2 1630.3,764 1616.2,761.3" fill="url(#gS3)" /><clipPath id="c10"><polygon points="1520.3,741.4 1781.8,725.2 1781.8,785.1 1702.5,783.3 1676,777.2 1630.3,764 1616.2,761.3"/></clipPath><path clip-path="url(#c10)" d="M1507.7 624.7L1779.6 610.0M1508.0 630.7L1779.9 616.0M1508.3 636.7L1780.2 622.0M1508.7 642.6L1780.5 628.0M1509.0 648.6L1780.9 634.0M1509.3 654.6L1781.2 640.0M1509.6 660.6L1781.5 646.0M1509.9 666.6L1781.8 652.0M1510.3 672.6L1782.2 658.0M1510.6 678.6L1782.5 664.0M1510.9 684.6L1782.8 669.9M1511.2 690.6L1783.1 675.9M1511.6 696.6L1783.4 681.9M1511.9 702.6L1783.8 687.9M1512.2 708.5L1784.1 693.9M1512.5 714.5L1784.4 699.9M1512.9 720.5L1784.7 705.9M1513.2 726.5L1785.1 711.9M1513.5 732.5L1785.4 717.9M1513.8 738.5L1785.7 723.9M1514.1 744.5L1786.0 729.9M1514.5 750.5L1786.3 735.8M1514.8 756.5L1786.7 741.8M1515.1 762.5L1787.0 747.8M1515.4 768.5L1787.3 753.8M1515.8 774.5L1787.6 759.8M1516.1 780.4L1788.0 765.8M1516.4 786.4L1788.3 771.8M1516.7 792.4L1788.6 777.8M1517.0 798.4L1788.9 783.8M1517.4 804.4L1789.2 789.8M1517.7 810.4L1789.6 795.8M1518.0 816.4L1789.9 801.8M1518.3 822.4L1790.2 807.7M1518.7 828.4L1790.5 813.7M1519.0 834.4L1790.9 819.7M1519.3 840.4L1791.2 825.7M1519.6 846.3L1791.5 831.7M1519.9 852.3L1791.8 837.7M1520.3 858.3L1792.2 843.7M1520.6 864.3L1792.5 849.7M1520.9 870.3L1792.8 855.7M1521.2 876.3L1793.1 861.7M1521.6 882.3L1793.4 867.7M1521.9 888.3L1793.8 873.6M1522.2 894.3L1794.1 879.6M1522.5 900.3L1794.4 885.6M1540.8 594.0L1809.1 640.4M1539.6 600.9L1807.9 647.3M1538.4 607.8L1806.7 654.2M1537.2 614.7L1805.5 661.1M1536.0 621.6L1804.3 668.0M1534.8 628.5L1803.1 674.9M1533.6 635.4L1801.9 681.8M1532.4 642.3L1800.7 688.7M1531.2 649.2L1799.5 695.6M1530.0 656.1L1798.3 702.5M1528.8 663.0L1797.1 709.4M1527.7 669.9L1795.9 716.3M1526.5 676.8L1794.7 723.2M1525.3 683.7L1793.5 730.1M1524.1 690.5L1792.4 737.0M1522.9 697.4L1791.2 743.9M1521.7 704.3L1790.0 750.8M1520.5 711.2L1788.8 757.7M1519.3 718.1L1787.6 764.6M1518.1 725.0L1786.4 771.5M1516.9 731.9L1785.2 778.4M1515.7 738.8L1784.0 785.3M1514.5 745.7L1782.8 792.2M1513.3 752.6L1781.6 799.1M1512.1 759.5L1780.4 806.0M1510.9 766.4L1779.2 812.9M1509.7 773.3L1778.0 819.8M1508.6 780.2L1776.8 826.6M1507.4 787.1L1775.6 833.5M1506.2 794.0L1774.4 840.4M1505.0 800.9L1773.3 847.3M1503.8 807.8L1772.1 854.2M1502.6 814.7L1770.9 861.1M1501.4 821.6L1769.7 868.0M1500.2 828.5L1768.5 874.9M1499.0 835.4L1767.3 881.8M1497.8 842.3L1766.1 888.7M1496.6 849.2L1764.9 895.6M1495.4 856.1L1763.7 902.5M1494.2 863.0L1762.5 909.4M1493.0 869.9L1761.3 916.3" stroke="#4a4a4a" stroke-width="0.9" stroke-opacity="0.9" fill="none"/><polygon points="1834.6,736.7 1889.2,735.4 1889.2,779 1834.6,780.7" fill="#30e070" /><clipPath id="c11"><polygon points="1834.6,736.7 1889.2,735.4 1889.2,779 1834.6,780.7"/></clipPath><path clip-path="url(#c11)" d="M1823.2 719.2L1898.2 716.9M1823.5 727.2L1898.4 724.9M1823.7 735.2L1898.6 732.9M1824.0 743.2L1898.9 740.9M1824.2 751.2L1899.1 748.9M1824.4 759.2L1899.4 756.9M1824.7 767.2L1899.6 764.9M1824.9 775.2L1899.8 772.9M1825.2 783.2L1900.1 780.9M1825.4 791.2L1900.3 788.9M1825.6 799.2L1900.6 796.9M1880.9 706.6L1914.4 773.7M1873.8 710.2L1907.3 777.3M1866.6 713.8L1900.1 780.8M1859.5 717.4L1893.0 784.4M1852.3 721.0L1885.8 788.0M1845.1 724.5L1878.7 791.6M1838.0 728.1L1871.5 795.1M1830.8 731.7L1864.3 798.7M1823.7 735.3L1857.2 802.3M1816.5 738.8L1850.0 805.9M1809.4 742.4L1842.9 809.5" stroke="#4a4a4a" stroke-width="0.9" stroke-opacity="0.9" fill="none"/><polygon points="1931.7,738 2040,736 2040,775 1931.7,779.5" fill="#70d040" /><clipPath id="c12"><polygon points="1931.7,738 2040,736 2040,775 1931.7,779.5"/></clipPath><path clip-path="url(#c12)" d="M1923.6 695.6L2044.3 692.0M1923.8 703.6L2044.5 700.0M1924.1 711.6L2044.7 708.0M1924.3 719.6L2045.0 716.0M1924.6 727.6L2045.2 724.0M1924.8 735.6L2045.5 732.0M1925.0 743.6L2045.7 739.9M1925.3 751.6L2045.9 747.9M1925.5 759.6L2046.2 755.9M1925.8 767.6L2046.4 763.9M1926.0 775.6L2046.7 771.9M1926.2 783.5L2046.9 779.9M1926.5 791.5L2047.1 787.9M1926.7 799.5L2047.4 795.9M1927.0 807.5L2047.6 803.9M1927.2 815.5L2047.9 811.9M1927.4 823.5L2048.1 819.9M2016.1 675.1L2070.1 783.1M2008.9 678.7L2062.9 786.7M2001.8 682.3L2055.8 790.3M1994.6 685.9L2048.6 793.8M1987.5 689.5L2041.5 797.4M1980.3 693.0L2034.3 801.0M1973.2 696.6L2027.2 804.6M1966.0 700.2L2020.0 808.2M1958.9 703.8L2012.8 811.7M1951.7 707.3L2005.7 815.3M1944.5 710.9L1998.5 818.9M1937.4 714.5L1991.4 822.5M1930.2 718.1L1984.2 826.0M1923.1 721.7L1977.1 829.6M1915.9 725.2L1969.9 833.2M1908.8 728.8L1962.8 836.8M1901.6 732.4L1955.6 840.4" stroke="#4a4a4a" stroke-width="0.9" stroke-opacity="0.9" fill="none"/><polygon points="2043.6,724.4 2128,726.2 2183,753.7 2200,771 2215,776 2072.8,775.2" fill="#a0e020" /><clipPath id="c13"><polygon points="2043.6,724.4 2128,726.2 2183,753.7 2200,771 2215,776 2072.8,775.2"/></clipPath><path clip-path="url(#c13)" d="M2035.9 652.0L2218.9 648.5M2036.1 662.0L2219.1 658.5M2036.3 672.0L2219.3 668.5M2036.5 682.0L2219.4 678.5M2036.7 692.0L2219.6 688.5M2036.9 702.0L2219.8 698.5M2037.1 711.9L2220.0 708.5M2037.2 721.9L2220.2 718.5M2037.4 731.9L2220.4 728.5M2037.6 741.9L2220.6 738.5M2037.8 751.9L2220.8 748.5M2038.0 761.9L2221.0 758.5M2038.2 771.9L2221.2 768.5M2038.4 781.9L2221.4 778.5M2038.6 791.9L2221.5 788.5M2038.8 801.9L2221.7 798.4M2039.0 811.9L2221.9 808.4M2039.2 821.9L2222.1 818.4M2039.3 831.9L2222.3 828.4M2039.5 841.9L2222.5 838.4M2039.7 851.9L2222.7 848.4M2173.6 622.9L2259.7 784.3M2165.7 627.1L2251.8 788.6M2157.7 631.3L2243.8 792.8M2149.8 635.6L2235.9 797.1M2141.8 639.8L2227.9 801.3M2133.9 644.1L2220.0 805.5M2125.9 648.3L2212.1 809.8M2118.0 652.5L2204.1 814.0M2110.1 656.8L2196.2 818.2M2102.1 661.0L2188.2 822.5M2094.2 665.2L2180.3 826.7M2086.2 669.5L2172.4 830.9M2078.3 673.7L2164.4 835.2M2070.4 677.9L2156.5 839.4M2062.4 682.2L2148.5 843.6M2054.5 686.4L2140.6 847.9M2046.5 690.6L2132.7 852.1M2038.6 694.9L2124.7 856.3M2030.7 699.1L2116.8 860.6M2022.7 703.3L2108.8 864.8M2014.8 707.6L2100.9 869.1M2006.8 711.8L2092.9 873.3M1998.9 716.1L2085.0 877.5" stroke="#4a4a4a" stroke-width="0.9" stroke-opacity="0.9" fill="none"/><polygon points="1526.4,586 1787,559 1781.8,671.8 1720,663.8 1688.4,648 1677.9,649.8 1633.8,627.7 1623.3,622.5" fill="url(#gS4L)" /><clipPath id="c14"><polygon points="1526.4,586 1787,559 1781.8,671.8 1720,663.8 1688.4,648 1677.9,649.8 1633.8,627.7 1623.3,622.5"/></clipPath><path clip-path="url(#c14)" d="M1496.5 482.9L1782.5 449.9M1497.6 492.8L1783.7 459.8M1498.8 502.8L1784.8 469.8M1499.9 512.7L1786.0 479.7M1501.1 522.6L1787.1 489.6M1502.2 532.6L1788.3 499.6M1503.4 542.5L1789.4 509.5M1504.5 552.4L1790.6 519.4M1505.6 562.4L1791.7 529.4M1506.8 572.3L1792.9 539.3M1507.9 582.2L1794.0 549.2M1509.1 592.2L1795.1 559.2M1510.2 602.1L1796.3 569.1M1511.4 612.0L1797.4 579.0M1512.5 622.0L1798.6 589.0M1513.7 631.9L1799.7 598.9M1514.8 641.8L1800.9 608.8M1516.0 651.8L1802.0 618.8M1517.1 661.7L1803.2 628.7M1518.3 671.6L1804.3 638.6M1519.4 681.6L1805.5 648.6M1520.5 691.5L1806.6 658.5M1521.7 701.4L1807.8 668.4M1522.8 711.4L1808.9 678.4M1524.0 721.3L1810.0 688.3M1525.1 731.2L1811.2 698.2M1526.3 741.2L1812.3 708.2M1527.4 751.1L1813.5 718.1M1528.6 761.0L1814.6 728.0M1529.7 771.0L1815.8 738.0M1530.9 780.9L1816.9 747.9M1583.6 420.7L1848.2 534.4M1579.7 429.9L1844.3 543.6M1575.7 439.1L1840.3 552.8M1571.8 448.3L1836.4 562.0M1567.8 457.5L1832.4 571.2M1563.9 466.7L1828.5 580.4M1559.9 475.9L1824.5 589.6M1556.0 485.1L1820.6 598.7M1552.0 494.2L1816.6 607.9M1548.1 503.4L1812.7 617.1M1544.2 512.6L1808.7 626.3M1540.2 521.8L1804.8 635.5M1536.3 531.0L1800.8 644.7M1532.3 540.2L1796.9 653.9M1528.4 549.4L1792.9 663.1M1524.4 558.6L1789.0 672.2M1520.5 567.7L1785.0 681.4M1516.5 576.9L1781.1 690.6M1512.6 586.1L1777.1 699.8M1508.6 595.3L1773.2 709.0M1504.7 604.5L1769.2 718.2M1500.7 613.7L1765.3 727.4M1496.8 622.9L1761.4 736.6M1492.8 632.1L1757.4 745.7M1488.9 641.2L1753.5 754.9M1484.9 650.4L1749.5 764.1M1481.0 659.6L1745.6 773.3M1477.0 668.8L1741.6 782.5M1473.1 678.0L1737.7 791.7M1469.1 687.2L1733.7 800.9M1465.2 696.4L1729.8 810.1" stroke="#4a4a4a" stroke-width="0.9" stroke-opacity="0.9" fill="none"/><polygon points="1838,582.8 1892.7,579.3 1889,663.8 1838,665.6" fill="#50e830" /><clipPath id="c15"><polygon points="1838,582.8 1892.7,579.3 1889,663.8 1838,665.6"/></clipPath><path clip-path="url(#c15)" d="M1810.6 568.1L1916.7 564.9M1810.8 576.1L1917.0 572.9M1811.1 584.1L1917.2 580.9M1811.3 592.1L1917.5 588.9M1811.6 600.1L1917.7 596.9M1811.8 608.0L1917.9 604.9M1812.0 616.0L1918.2 612.9M1812.3 624.0L1918.4 620.9M1812.5 632.0L1918.7 628.9M1812.8 640.0L1918.9 636.9M1813.0 648.0L1919.1 644.8M1813.2 656.0L1919.4 652.8M1813.5 664.0L1919.6 660.8M1813.7 672.0L1919.9 668.8M1814.0 680.0L1920.1 676.8M1891.7 549.9L1939.2 644.9M1884.5 553.5L1932.0 648.5M1877.4 557.1L1924.9 652.0M1870.2 560.7L1917.7 655.6M1863.1 564.2L1910.6 659.2M1855.9 567.8L1903.4 662.8M1848.8 571.4L1896.2 666.4M1841.6 575.0L1889.1 669.9M1834.5 578.5L1881.9 673.5M1827.3 582.1L1874.8 677.1M1820.1 585.7L1867.6 680.7M1813.0 589.3L1860.5 684.2M1805.8 592.9L1853.3 687.8M1798.7 596.4L1846.2 691.4M1791.5 600.0L1839.0 695.0" stroke="#4a4a4a" stroke-width="0.9" stroke-opacity="0.9" fill="none"/><polygon points="1935,582 2007,581 2043,586 2043,658 1935,660" fill="#b0e020" /><clipPath id="c16"><polygon points="1935,582 2007,581 2043,586 2043,658 1935,660"/></clipPath><path clip-path="url(#c16)" d="M1918.0 550.6L2055.7 546.5M1918.2 558.6L2056.0 554.5M1918.4 566.6L2056.2 562.5M1918.7 574.6L2056.4 570.5M1918.9 582.6L2056.7 578.5M1919.2 590.6L2056.9 586.4M1919.4 598.6L2057.2 594.4M1919.6 606.6L2057.4 602.4M1919.9 614.6L2057.6 610.4M1920.1 622.6L2057.9 618.4M1920.4 630.6L2058.1 626.4M1920.6 638.6L2058.4 634.4M1920.8 646.6L2058.6 642.4M1921.1 654.6L2058.8 650.4M1921.3 662.5L2059.1 658.4M1921.6 670.5L2059.3 666.4M1921.8 678.5L2059.6 674.4M1922.0 686.5L2059.8 682.4M1922.3 694.5L2060.0 690.4M2022.6 526.7L2084.2 649.9M2015.4 530.2L2077.1 653.5M2008.3 533.8L2069.9 657.1M2001.1 537.4L2062.7 660.7M1994.0 541.0L2055.6 664.2M1986.8 544.6L2048.4 667.8M1979.7 548.1L2041.3 671.4M1972.5 551.7L2034.1 675.0M1965.3 555.3L2027.0 678.6M1958.2 558.9L2019.8 682.1M1951.0 562.4L2012.7 685.7M1943.9 566.0L2005.5 689.3M1936.7 569.6L1998.3 692.9M1929.6 573.2L1991.2 696.4M1922.4 576.8L1984.0 700.0M1915.3 580.3L1976.9 703.6M1908.1 583.9L1969.7 707.2M1900.9 587.5L1962.6 710.8M1893.8 591.1L1955.4 714.3" stroke="#4a4a4a" stroke-width="0.9" stroke-opacity="0.9" fill="none"/><polygon points="2043.6,547.5 2129.7,545.8 2184,597.5 2171,599 2171,603 2188,604 2200,625 2190,628 2193,634 2215,651 2073,654" fill="url(#gS4R)" /><clipPath id="c17"><polygon points="2043.6,547.5 2129.7,545.8 2184,597.5 2171,599 2171,603 2188,604 2200,625 2190,628 2193,634 2215,651 2073,654"/></clipPath><path clip-path="url(#c17)" d="M2023.9 491.9L2230.5 488.0M2024.1 501.9L2230.7 497.9M2024.3 511.9L2230.9 507.9M2024.4 521.9L2231.1 517.9M2024.6 531.9L2231.3 527.9M2024.8 541.9L2231.5 537.9M2025.0 551.9L2231.7 547.9M2025.2 561.9L2231.9 557.9M2025.4 571.9L2232.1 567.9M2025.6 581.9L2232.2 577.9M2025.8 591.9L2232.4 587.9M2026.0 601.9L2232.6 597.9M2026.2 611.9L2232.8 607.9M2026.4 621.9L2233.0 617.9M2026.5 631.9L2233.2 627.9M2026.7 641.9L2233.4 637.9M2026.9 651.9L2233.6 647.9M2027.1 661.9L2233.8 657.9M2027.3 671.9L2234.0 667.9M2027.5 681.9L2234.2 677.9M2027.7 691.9L2234.3 687.9M2027.9 701.9L2234.5 697.9M2028.1 711.8L2234.7 707.9M2176.0 457.9L2273.2 640.3M2168.0 462.1L2265.3 644.5M2160.1 466.4L2257.3 648.7M2152.1 470.6L2249.4 653.0M2144.2 474.8L2241.5 657.2M2136.3 479.1L2233.5 661.4M2128.3 483.3L2225.6 665.7M2120.4 487.5L2217.6 669.9M2112.4 491.8L2209.7 674.1M2104.5 496.0L2201.8 678.4M2096.5 500.2L2193.8 682.6M2088.6 504.5L2185.9 686.9M2080.7 508.7L2177.9 691.1M2072.7 512.9L2170.0 695.3M2064.8 517.2L2162.1 699.6M2056.8 521.4L2154.1 703.8M2048.9 525.7L2146.2 708.0M2041.0 529.9L2138.2 712.3M2033.0 534.1L2130.3 716.5M2025.1 538.4L2122.3 720.7M2017.1 542.6L2114.4 725.0M2009.2 546.8L2106.5 729.2M2001.3 551.1L2098.5 733.4M1993.3 555.3L2090.6 737.7M1985.4 559.5L2082.6 741.9" stroke="#4a4a4a" stroke-width="0.9" stroke-opacity="0.9" fill="none"/><polygon points="1530.5,433.7 1618,419 1790.5,394.3 1792,559 1785.6,558.8 1744,554.8 1712.7,539 1691,523.3 1681,525.3 1638,495.8 1636,487 1628,488.9" fill="url(#gS5L)" /><clipPath id="c18"><polygon points="1530.5,433.7 1618,419 1790.5,394.3 1792,559 1785.6,558.8 1744,554.8 1712.7,539 1691,523.3 1681,525.3 1638,495.8 1636,487 1628,488.9"/></clipPath><path clip-path="url(#c18)" d="M1481.0 334.4L1790.4 286.8M1482.8 346.3L1792.2 298.7M1484.7 358.1L1794.1 310.5M1486.5 370.0L1795.9 322.4M1488.3 381.8L1797.7 334.2M1490.1 393.7L1799.5 346.1M1492.0 405.6L1801.4 358.0M1493.8 417.4L1803.2 369.8M1495.6 429.3L1805.0 381.7M1497.4 441.1L1806.8 393.5M1499.2 453.0L1808.7 405.4M1501.1 464.9L1810.5 417.3M1502.9 476.7L1812.3 429.1M1504.7 488.6L1814.1 441.0M1506.5 500.5L1816.0 452.8M1508.4 512.3L1817.8 464.7M1510.2 524.2L1819.6 476.6M1512.0 536.0L1821.4 488.4M1513.8 547.9L1823.3 500.3M1515.7 559.8L1825.1 512.2M1517.5 571.6L1826.9 524.0M1519.3 583.5L1828.7 535.9M1521.1 595.3L1830.5 547.7M1523.0 607.2L1832.4 559.6M1524.8 619.1L1834.2 571.5M1526.6 630.9L1836.0 583.3M1528.4 642.8L1837.8 595.2M1530.3 654.6L1839.7 607.0M1532.1 666.5L1841.5 618.9M1593.7 259.5L1874.5 397.7M1588.8 269.4L1869.7 407.6M1584.0 279.2L1864.8 417.5M1579.1 289.1L1860.0 427.3M1574.2 299.0L1855.1 437.2M1569.4 308.8L1850.3 447.1M1564.5 318.7L1845.4 456.9M1559.7 328.6L1840.5 466.8M1554.8 338.4L1835.7 476.7M1550.0 348.3L1830.8 486.6M1545.1 358.2L1826.0 496.4M1540.2 368.1L1821.1 506.3M1535.4 377.9L1816.3 516.2M1530.5 387.8L1811.4 526.0M1525.7 397.7L1806.5 535.9M1520.8 407.5L1801.7 545.8M1516.0 417.4L1796.8 555.6M1511.1 427.3L1792.0 565.5M1506.2 437.1L1787.1 575.4M1501.4 447.0L1782.3 585.2M1496.5 456.9L1777.4 595.1M1491.7 466.7L1772.5 605.0M1486.8 476.6L1767.7 614.9M1482.0 486.5L1762.8 624.7M1477.1 496.4L1758.0 634.6M1472.2 506.2L1753.1 644.5M1467.4 516.1L1748.3 654.3M1462.5 526.0L1743.4 664.2M1457.7 535.8L1738.5 674.1M1452.8 545.7L1733.7 683.9M1448.0 555.6L1728.8 693.8" stroke="#4a4a4a" stroke-width="0.9" stroke-opacity="0.9" fill="none"/><polygon points="1841,431 1896,424 1896,549 1841,553" fill="#58f030" /><clipPath id="c19"><polygon points="1841,431 1896,424 1896,549 1841,553"/></clipPath><path clip-path="url(#c19)" d="M1794.0 410.7L1938.2 406.4M1794.3 418.7L1938.4 414.4M1794.5 426.7L1938.7 422.4M1794.7 434.7L1938.9 430.4M1795.0 442.7L1939.1 438.4M1795.2 450.7L1939.4 446.4M1795.5 458.7L1939.6 454.4M1795.7 466.7L1939.9 462.3M1795.9 474.7L1940.1 470.3M1796.2 482.7L1940.3 478.3M1796.4 490.7L1940.6 486.3M1796.7 498.7L1940.8 494.3M1796.9 506.7L1941.1 502.3M1797.1 514.7L1941.3 510.3M1797.4 522.6L1941.5 518.3M1797.6 530.6L1941.8 526.3M1797.9 538.6L1942.0 534.3M1798.1 546.6L1942.3 542.3M1798.3 554.6L1942.5 550.3M1798.6 562.6L1942.7 558.3M1798.8 570.6L1943.0 566.3M1907.8 388.2L1972.3 517.2M1900.6 391.8L1965.2 520.8M1893.5 395.4L1958.0 524.4M1886.3 399.0L1950.8 528.0M1879.2 402.5L1943.7 531.5M1872.0 406.1L1936.5 535.1M1864.9 409.7L1929.4 538.7M1857.7 413.3L1922.2 542.3M1850.6 416.8L1915.1 545.8M1843.4 420.4L1907.9 549.4M1836.2 424.0L1900.8 553.0M1829.1 427.6L1893.6 556.6M1821.9 431.2L1886.4 560.2M1814.8 434.7L1879.3 563.7M1807.6 438.3L1872.1 567.3M1800.5 441.9L1865.0 570.9M1793.3 445.5L1857.8 574.5M1786.2 449.0L1850.7 578.0M1779.0 452.6L1843.5 581.6M1771.8 456.2L1836.4 585.2M1764.7 459.8L1829.2 588.8" stroke="#4a4a4a" stroke-width="0.9" stroke-opacity="0.9" fill="none"/><polygon points="1930,428 2007.6,423.7 2026,446 2043,445 2043,536 1930,539" fill="url(#gS5M)" /><clipPath id="c20"><polygon points="1930,428 2007.6,423.7 2026,446 2043,445 2043,536 1930,539"/></clipPath><path clip-path="url(#c20)" d="M1901.2 395.9L2066.5 390.9M1901.4 403.9L2066.8 398.9M1901.7 411.9L2067.0 406.9M1901.9 419.9L2067.3 414.9M1902.1 427.9L2067.5 422.9M1902.4 435.9L2067.7 430.9M1902.6 443.8L2068.0 438.9M1902.9 451.8L2068.2 446.9M1903.1 459.8L2068.5 454.9M1903.3 467.8L2068.7 462.9M1903.6 475.8L2068.9 470.9M1903.8 483.8L2069.2 478.9M1904.1 491.8L2069.4 486.9M1904.3 499.8L2069.7 494.9M1904.5 507.8L2069.9 502.9M1904.8 515.8L2070.1 510.9M1905.0 523.8L2070.4 518.9M1905.3 531.8L2070.6 526.8M1905.5 539.8L2070.9 534.8M1905.7 547.8L2071.1 542.8M1906.0 555.8L2071.3 550.8M1906.2 563.8L2071.6 558.8M1906.5 571.8L2071.8 566.8M2028.2 368.0L2102.2 516.0M2021.1 371.6L2095.0 519.6M2013.9 375.2L2087.9 523.1M2006.7 378.7L2080.7 526.7M1999.6 382.3L2073.6 530.3M1992.4 385.9L2066.4 533.9M1985.3 389.5L2059.3 537.4M1978.1 393.1L2052.1 541.0M1971.0 396.6L2045.0 544.6M1963.8 400.2L2037.8 548.2M1956.7 403.8L2030.6 551.8M1949.5 407.4L2023.5 555.3M1942.4 410.9L2016.3 558.9M1935.2 414.5L2009.2 562.5M1928.0 418.1L2002.0 566.1M1920.9 421.7L1994.9 569.6M1913.7 425.3L1987.7 573.2M1906.6 428.8L1980.6 576.8M1899.4 432.4L1973.4 580.4M1892.3 436.0L1966.3 584.0M1885.1 439.6L1959.1 587.5M1878.0 443.1L1951.9 591.1M1870.8 446.7L1944.8 594.7" stroke="#4a4a4a" stroke-width="0.9" stroke-opacity="0.9" fill="none"/><polygon points="2046,372 2152.6,369.6 2185,446 2174,450 2189,455 2202,487 2194,491 2204,508 2215,528 2075,533 2046,540" fill="url(#gS5R)" /><clipPath id="c21"><polygon points="2046,372 2152.6,369.6 2185,446 2174,450 2189,455 2202,487 2194,491 2204,508 2215,528 2075,533 2046,540"/></clipPath><path clip-path="url(#c21)" d="M2006.0 327.1L2250.0 322.5M2006.2 337.1L2250.2 332.5M2006.4 347.1L2250.4 342.5M2006.6 357.1L2250.6 352.5M2006.8 367.1L2250.8 362.5M2007.0 377.1L2251.0 372.5M2007.2 387.1L2251.1 382.5M2007.4 397.1L2251.3 392.5M2007.6 407.1L2251.5 402.5M2007.8 417.1L2251.7 412.5M2008.0 427.1L2251.9 422.5M2008.1 437.1L2252.1 432.5M2008.3 447.1L2252.3 442.5M2008.5 457.1L2252.5 452.5M2008.7 467.1L2252.7 462.5M2008.9 477.1L2252.9 472.5M2009.1 487.1L2253.0 482.5M2009.3 497.1L2253.2 492.5M2009.5 507.1L2253.4 502.5M2009.7 517.1L2253.6 512.5M2009.9 527.1L2253.8 522.5M2010.0 537.1L2254.0 532.5M2010.2 547.1L2254.2 542.5M2010.4 557.1L2254.4 552.5M2010.6 567.1L2254.6 562.5M2010.8 577.1L2254.8 572.5M2011.0 587.1L2255.0 582.5M2184.3 287.9L2299.1 503.2M2176.3 292.1L2291.1 507.4M2168.4 296.3L2283.2 511.6M2160.4 300.6L2275.3 515.9M2152.5 304.8L2267.3 520.1M2144.6 309.0L2259.4 524.3M2136.6 313.3L2251.4 528.6M2128.7 317.5L2243.5 532.8M2120.7 321.7L2235.6 537.0M2112.8 326.0L2227.6 541.3M2104.9 330.2L2219.7 545.5M2096.9 334.4L2211.7 549.7M2089.0 338.7L2203.8 554.0M2081.0 342.9L2195.9 558.2M2073.1 347.2L2187.9 562.4M2065.1 351.4L2180.0 566.7M2057.2 355.6L2172.0 570.9M2049.3 359.9L2164.1 575.2M2041.3 364.1L2156.1 579.4M2033.4 368.3L2148.2 583.6M2025.4 372.6L2140.3 587.9M2017.5 376.8L2132.3 592.1M2009.6 381.0L2124.4 596.3M2001.6 385.3L2116.4 600.6M1993.7 389.5L2108.5 604.8M1985.7 393.7L2100.6 609.0M1977.8 398.0L2092.6 613.3M1969.9 402.2L2084.7 617.5M1961.9 406.4L2076.7 621.7" stroke="#4a4a4a" stroke-width="0.9" stroke-opacity="0.9" fill="none"/><line x1="1618" y1="419" x2="1599" y2="1250" stroke="url(#gCol)" stroke-width="2.6" /><line x1="1706" y1="473" x2="1691" y2="1206" stroke="url(#gCol)" stroke-width="2.6" /><line x1="1884" y1="262" x2="1867" y2="1220" stroke="url(#gCol)" stroke-width="2.6" /><line x1="1978" y1="430" x2="1969" y2="1060" stroke="url(#gCol)" stroke-width="2.6" /><line x1="2090" y1="240" x2="2080" y2="1240" stroke="url(#gCol)" stroke-width="2.6" /><line x1="2148" y1="530" x2="2143" y2="1170" stroke="url(#gCol)" stroke-width="2.6" /><polygon points="1920,428 2007,425 1992,467" fill="url(#gStair)" /><clipPath id="c22"><polygon points="1920,428 2007,425 1992,467"/></clipPath><path clip-path="url(#c22)" d="M1902.0 407.3L1999.6 382.9M1902.8 410.7L2000.4 386.3M1903.7 414.1L2001.3 389.7M1904.5 417.5L2002.1 393.1M1905.4 420.8L2003.0 396.4M1906.2 424.2L2003.8 399.8M1907.1 427.6L2004.7 403.2M1907.9 431.0L2005.5 406.6M1908.8 434.4L2006.4 410.0M1909.6 437.8L2007.2 413.4M1910.5 441.2L2008.1 416.8M1911.3 444.6L2008.9 420.2M1912.2 448.0L2009.8 423.6M1913.0 451.4L2010.6 427.0M1913.8 454.8L2011.5 430.4M1914.7 458.2L2012.3 433.8M1915.5 461.6L2013.2 437.2M1916.4 465.0L2014.0 440.6M1917.2 468.4L2014.8 444.0M1918.1 471.8L2015.7 447.4M1918.9 475.2L2016.5 450.8M1919.8 478.6L2017.4 454.2M1920.6 482.0L2018.2 457.6M1921.5 485.4L2019.1 461.0M1922.3 488.8L2019.9 464.4M1923.2 492.2L2020.8 467.8M1924.0 495.6L2021.6 471.2M1924.9 498.9L2022.5 474.5M1925.7 502.3L2023.3 477.9M1926.6 505.7L2024.2 481.3M1927.4 509.1L2025.0 484.7M2001.7 384.6L2026.1 482.2M1997.9 385.6L2022.3 483.2M1994.0 386.5L2018.4 484.1M1990.1 387.5L2014.5 485.1M1986.2 388.5L2010.6 486.1M1982.3 389.4L2006.7 487.0M1978.5 390.4L2002.9 488.0M1974.6 391.4L1999.0 489.0M1970.7 392.3L1995.1 490.0M1966.8 393.3L1991.2 490.9M1962.9 394.3L1987.3 491.9M1959.1 395.3L1983.5 492.9M1955.2 396.2L1979.6 493.8M1951.3 397.2L1975.7 494.8M1947.4 398.2L1971.8 495.8M1943.5 399.1L1967.9 496.7M1939.7 400.1L1964.1 497.7M1935.8 401.1L1960.2 498.7M1931.9 402.0L1956.3 499.7M1928.0 403.0L1952.4 500.6M1924.1 404.0L1948.5 501.6M1920.3 405.0L1944.7 502.6M1916.4 405.9L1940.8 503.5M1912.5 406.9L1936.9 504.5M1908.6 407.9L1933.0 505.5M1904.7 408.8L1929.1 506.4M1900.9 409.8L1925.3 507.4" stroke="#484848" stroke-width="0.8" stroke-opacity="0.95" fill="none"/><polygon points="1992,460 2044,486 2042,572 2008,572 1999,508" fill="url(#gStair)" /><clipPath id="c23"><polygon points="1992,460 2044,486 2042,572 2008,572 1999,508"/></clipPath><path clip-path="url(#c23)" d="M1940.0 466.9L2063.7 436.0M1940.9 470.3L2064.6 439.4M1941.7 473.7L2065.4 442.8M1942.6 477.1L2066.3 446.2M1943.4 480.5L2067.1 449.6M1944.3 483.9L2068.0 453.0M1945.1 487.3L2068.8 456.4M1946.0 490.7L2069.7 459.8M1946.8 494.1L2070.5 463.2M1947.7 497.5L2071.3 466.6M1948.5 500.9L2072.2 470.0M1949.4 504.3L2073.0 473.4M1950.2 507.7L2073.9 476.8M1951.1 511.1L2074.7 480.2M1951.9 514.5L2075.6 483.6M1952.8 517.9L2076.4 487.0M1953.6 521.3L2077.3 490.4M1954.5 524.7L2078.1 493.7M1955.3 528.1L2079.0 497.1M1956.2 531.5L2079.8 500.5M1957.0 534.9L2080.7 503.9M1957.9 538.3L2081.5 507.3M1958.7 541.6L2082.4 510.7M1959.6 545.0L2083.2 514.1M1960.4 548.4L2084.1 517.5M1961.3 551.8L2084.9 520.9M1962.1 555.2L2085.8 524.3M1963.0 558.6L2086.6 527.7M1963.8 562.0L2087.5 531.1M1964.7 565.4L2088.3 534.5M1965.5 568.8L2089.2 537.9M1966.3 572.2L2090.0 541.3M1967.2 575.6L2090.9 544.7M1968.0 579.0L2091.7 548.1M1968.9 582.4L2092.6 551.5M1969.7 585.8L2093.4 554.9M1970.6 589.2L2094.3 558.3M1971.4 592.6L2095.1 561.7M1972.3 596.0L2096.0 565.1M2064.6 438.6L2095.5 562.3M2060.7 439.6L2091.7 563.3M2056.9 440.6L2087.8 564.3M2053.0 441.5L2083.9 565.2M2049.1 442.5L2080.0 566.2M2045.2 443.5L2076.1 567.2M2041.3 444.5L2072.3 568.1M2037.5 445.4L2068.4 569.1M2033.6 446.4L2064.5 570.1M2029.7 447.4L2060.6 571.0M2025.8 448.3L2056.7 572.0M2021.9 449.3L2052.9 573.0M2018.1 450.3L2049.0 574.0M2014.2 451.3L2045.1 574.9M2010.3 452.2L2041.2 575.9M2006.4 453.2L2037.3 576.9M2002.5 454.2L2033.5 577.8M1998.7 455.1L2029.6 578.8M1994.8 456.1L2025.7 579.8M1990.9 457.1L2021.8 580.7M1987.0 458.0L2017.9 581.7M1983.1 459.0L2014.1 582.7M1979.3 460.0L2010.2 583.7M1975.4 461.0L2006.3 584.6M1971.5 461.9L2002.4 585.6M1967.6 462.9L1998.5 586.6M1963.7 463.9L1994.7 587.5M1959.9 464.8L1990.8 588.5M1956.0 465.8L1986.9 589.5M1952.1 466.8L1983.0 590.5M1948.2 467.7L1979.1 591.4M1944.3 468.7L1975.3 592.4M1940.5 469.7L1971.4 593.4" stroke="#484848" stroke-width="0.8" stroke-opacity="0.95" fill="none"/><polygon points="1918.5,590 2005,582 1992,633" fill="url(#gStair)" /><clipPath id="c24"><polygon points="1918.5,590 2005,582 1992,633"/></clipPath><path clip-path="url(#c24)" d="M1898.4 569.2L1999.7 543.9M1899.2 572.6L2000.5 547.3M1900.1 576.0L2001.4 550.7M1900.9 579.4L2002.2 554.1M1901.8 582.8L2003.1 557.5M1902.6 586.2L2003.9 560.9M1903.5 589.6L2004.8 564.3M1904.3 593.0L2005.6 567.7M1905.2 596.4L2006.5 571.1M1906.0 599.8L2007.3 574.5M1906.9 603.2L2008.2 577.9M1907.7 606.6L2009.0 581.3M1908.6 610.0L2009.9 584.7M1909.4 613.4L2010.7 588.0M1910.3 616.8L2011.6 591.4M1911.1 620.2L2012.4 594.8M1911.9 623.6L2013.2 598.2M1912.8 627.0L2014.1 601.6M1913.6 630.3L2014.9 605.0M1914.5 633.7L2015.8 608.4M1915.3 637.1L2016.6 611.8M1916.2 640.5L2017.5 615.2M1917.0 643.9L2018.3 618.6M1917.9 647.3L2019.2 622.0M1918.7 650.7L2020.0 625.4M1919.6 654.1L2020.9 628.8M1920.4 657.5L2021.7 632.2M1921.3 660.9L2022.6 635.6M1922.1 664.3L2023.4 639.0M1923.0 667.7L2024.3 642.4M1923.8 671.1L2025.1 645.8M2003.4 543.3L2028.7 644.6M1999.5 544.2L2024.9 645.5M1995.7 545.2L2021.0 646.5M1991.8 546.2L2017.1 647.5M1987.9 547.1L2013.2 648.4M1984.0 548.1L2009.3 649.4M1980.1 549.1L2005.5 650.4M1976.3 550.1L2001.6 651.4M1972.4 551.0L1997.7 652.3M1968.5 552.0L1993.8 653.3M1964.6 553.0L1989.9 654.3M1960.7 553.9L1986.1 655.2M1956.8 554.9L1982.2 656.2M1953.0 555.9L1978.3 657.2M1949.1 556.9L1974.4 658.1M1945.2 557.8L1970.5 659.1M1941.3 558.8L1966.7 660.1M1937.4 559.8L1962.8 661.1M1933.6 560.7L1958.9 662.0M1929.7 561.7L1955.0 663.0M1925.8 562.7L1951.1 664.0M1921.9 563.6L1947.2 664.9M1918.0 564.6L1943.4 665.9M1914.2 565.6L1939.5 666.9M1910.3 566.6L1935.6 667.9M1906.4 567.5L1931.7 668.8M1902.5 568.5L1927.8 669.8M1898.6 569.5L1924.0 670.8M1894.8 570.4L1920.1 671.7" stroke="#484848" stroke-width="0.8" stroke-opacity="0.95" fill="none"/><polygon points="1989,633 2040,649 2040,723 2008,726 1995,675" fill="url(#gStair)" /><clipPath id="c25"><polygon points="1989,633 2040,649 2040,723 2008,726 1995,675"/></clipPath><path clip-path="url(#c25)" d="M1947.5 638.5L2054.3 611.8M1948.4 641.9L2055.2 615.2M1949.2 645.3L2056.0 618.6M1950.1 648.7L2056.9 622.0M1950.9 652.1L2057.7 625.4M1951.8 655.5L2058.6 628.8M1952.6 658.9L2059.4 632.2M1953.5 662.3L2060.2 635.6M1954.3 665.7L2061.1 639.0M1955.2 669.1L2061.9 642.4M1956.0 672.5L2062.8 645.8M1956.9 675.9L2063.6 649.2M1957.7 679.3L2064.5 652.6M1958.6 682.7L2065.3 656.0M1959.4 686.1L2066.2 659.4M1960.3 689.5L2067.0 662.8M1961.1 692.8L2067.9 666.2M1962.0 696.2L2068.7 669.5M1962.8 699.6L2069.6 672.9M1963.7 703.0L2070.4 676.3M1964.5 706.4L2071.3 679.7M1965.4 709.8L2072.1 683.1M1966.2 713.2L2073.0 686.5M1967.1 716.6L2073.8 689.9M1967.9 720.0L2074.7 693.3M1968.8 723.4L2075.5 696.7M1969.6 726.8L2076.4 700.1M1970.4 730.2L2077.2 703.5M1971.3 733.6L2078.1 706.9M1972.1 737.0L2078.9 710.3M1973.0 740.4L2079.8 713.7M1973.8 743.8L2080.6 717.1M1974.7 747.2L2081.5 720.5M2055.5 612.5L2082.2 719.3M2051.6 613.5L2078.3 720.3M2047.7 614.5L2074.4 721.2M2043.8 615.4L2070.5 722.2M2040.0 616.4L2066.7 723.2M2036.1 617.4L2062.8 724.2M2032.2 618.3L2058.9 725.1M2028.3 619.3L2055.0 726.1M2024.4 620.3L2051.1 727.1M2020.6 621.3L2047.3 728.0M2016.7 622.2L2043.4 729.0M2012.8 623.2L2039.5 730.0M2008.9 624.2L2035.6 730.9M2005.0 625.1L2031.7 731.9M2001.2 626.1L2027.8 732.9M1997.3 627.1L2024.0 733.9M1993.4 628.1L2020.1 734.8M1989.5 629.0L2016.2 735.8M1985.6 630.0L2012.3 736.8M1981.7 631.0L2008.4 737.7M1977.9 631.9L2004.6 738.7M1974.0 632.9L2000.7 739.7M1970.1 633.9L1996.8 740.7M1966.2 634.8L1992.9 741.6M1962.3 635.8L1989.0 742.6M1958.5 636.8L1985.2 743.6M1954.6 637.8L1981.3 744.5M1950.7 638.7L1977.4 745.5M1946.8 639.7L1973.5 746.5" stroke="#484848" stroke-width="0.8" stroke-opacity="0.95" fill="none"/><polygon points="2040,690 2072,700 2087,722 2040,725" fill="url(#gStair)" /><clipPath id="c26"><polygon points="2040,690 2072,700 2087,722 2040,725"/></clipPath><path clip-path="url(#c26)" d="M2025.5 684.5L2086.2 669.3M2026.3 687.9L2087.1 672.7M2027.2 691.3L2087.9 676.1M2028.0 694.7L2088.8 679.5M2028.9 698.1L2089.6 682.9M2029.7 701.5L2090.5 686.3M2030.6 704.9L2091.3 689.7M2031.4 708.3L2092.2 693.1M2032.3 711.7L2093.0 696.5M2033.1 715.1L2093.9 699.9M2034.0 718.5L2094.7 703.3M2034.8 721.9L2095.6 706.7M2035.7 725.3L2096.4 710.1M2036.5 728.7L2097.3 713.5M2037.4 732.1L2098.1 716.9M2038.2 735.5L2099.0 720.3M2039.1 738.9L2099.8 723.7M2039.9 742.3L2100.7 727.1M2040.8 745.7L2101.5 730.5M2087.0 669.4L2102.1 730.1M2083.1 670.3L2098.3 731.1M2079.2 671.3L2094.4 732.0M2075.3 672.3L2090.5 733.0M2071.4 673.3L2086.6 734.0M2067.6 674.2L2082.7 735.0M2063.7 675.2L2078.9 735.9M2059.8 676.2L2075.0 736.9M2055.9 677.1L2071.1 737.9M2052.0 678.1L2067.2 738.8M2048.1 679.1L2063.3 739.8M2044.3 680.0L2059.4 740.8M2040.4 681.0L2055.6 741.7M2036.5 682.0L2051.7 742.7M2032.6 683.0L2047.8 743.7M2028.7 683.9L2043.9 744.7M2024.9 684.9L2040.0 745.6" stroke="#484848" stroke-width="0.8" stroke-opacity="0.95" fill="none"/><polygon points="1915,752 2002,733 1990,780 1986,800" fill="url(#gStair)" /><clipPath id="c27"><polygon points="1915,752 2002,733 1990,780 1986,800"/></clipPath><path clip-path="url(#c27)" d="M1888.9 722.6L1999.3 695.0M1889.7 726.0L2000.1 698.4M1890.6 729.4L2001.0 701.8M1891.4 732.8L2001.8 705.2M1892.3 736.2L2002.7 708.6M1893.1 739.6L2003.5 712.0M1894.0 743.0L2004.4 715.3M1894.8 746.3L2005.2 718.7M1895.7 749.7L2006.1 722.1M1896.5 753.1L2006.9 725.5M1897.4 756.5L2007.8 728.9M1898.2 759.9L2008.6 732.3M1899.1 763.3L2009.5 735.7M1899.9 766.7L2010.3 739.1M1900.7 770.1L2011.2 742.5M1901.6 773.5L2012.0 745.9M1902.4 776.9L2012.9 749.3M1903.3 780.3L2013.7 752.7M1904.1 783.7L2014.6 756.1M1905.0 787.1L2015.4 759.5M1905.8 790.5L2016.3 762.9M1906.7 793.9L2017.1 766.3M1907.5 797.3L2017.9 769.7M1908.4 800.7L2018.8 773.1M1909.2 804.1L2019.6 776.5M1910.1 807.5L2020.5 779.9M1910.9 810.9L2021.3 783.3M1911.8 814.3L2022.2 786.7M1912.6 817.7L2023.0 790.0M1913.5 821.0L2023.9 793.4M1914.3 824.4L2024.7 796.8M1915.2 827.8L2025.6 800.2M1916.0 831.2L2026.4 803.6M1916.9 834.6L2027.3 807.0M1917.7 838.0L2028.1 810.4M2002.9 696.7L2030.5 807.2M1999.0 697.7L2026.6 808.1M1995.1 698.7L2022.7 809.1M1991.3 699.7L2018.9 810.1M1987.4 700.6L2015.0 811.0M1983.5 701.6L2011.1 812.0M1979.6 702.6L2007.2 813.0M1975.7 703.5L2003.3 813.9M1971.9 704.5L1999.5 814.9M1968.0 705.5L1995.6 815.9M1964.1 706.4L1991.7 816.9M1960.2 707.4L1987.8 817.8M1956.3 708.4L1983.9 818.8M1952.5 709.4L1980.1 819.8M1948.6 710.3L1976.2 820.7M1944.7 711.3L1972.3 821.7M1940.8 712.3L1968.4 822.7M1936.9 713.2L1964.5 823.6M1933.1 714.2L1960.7 824.6M1929.2 715.2L1956.8 825.6M1925.3 716.1L1952.9 826.6M1921.4 717.1L1949.0 827.5M1917.5 718.1L1945.1 828.5M1913.7 719.1L1941.3 829.5M1909.8 720.0L1937.4 830.4M1905.9 721.0L1933.5 831.4M1902.0 722.0L1929.6 832.4M1898.1 722.9L1925.7 833.3M1894.3 723.9L1921.9 834.3M1890.4 724.9L1918.0 835.3M1886.5 725.8L1914.1 836.3" stroke="#484848" stroke-width="0.8" stroke-opacity="0.95" fill="none"/><polygon points="1932.8,780 1989.7,780 1987.5,804" fill="url(#gStair)" /><clipPath id="c28"><polygon points="1932.8,780 1989.7,780 1987.5,804"/></clipPath><path clip-path="url(#c28)" d="M1920.9 766.0L1984.7 750.1M1921.7 769.4L1985.5 753.5M1922.6 772.8L1986.4 756.9M1923.4 776.2L1987.2 760.3M1924.3 779.6L1988.1 763.7M1925.1 783.0L1988.9 767.0M1926.0 786.4L1989.8 770.4M1926.8 789.8L1990.6 773.8M1927.7 793.2L1991.4 777.2M1928.5 796.6L1992.3 780.6M1929.4 800.0L1993.1 784.0M1930.2 803.4L1994.0 787.4M1931.1 806.8L1994.8 790.8M1931.9 810.2L1995.7 794.2M1932.7 813.6L1996.5 797.6M1933.6 817.0L1997.4 801.0M1934.4 820.3L1998.2 804.4M1935.3 823.7L1999.1 807.8M1936.1 827.1L1999.9 811.2M1937.0 830.5L2000.8 814.6M1937.8 833.9L2001.6 818.0M1988.2 751.4L2004.1 815.2M1984.3 752.3L2000.3 816.1M1980.4 753.3L1996.4 817.1M1976.6 754.3L1992.5 818.1M1972.7 755.3L1988.6 819.0M1968.8 756.2L1984.7 820.0M1964.9 757.2L1980.9 821.0M1961.0 758.2L1977.0 822.0M1957.2 759.1L1973.1 822.9M1953.3 760.1L1969.2 823.9M1949.4 761.1L1965.3 824.9M1945.5 762.0L1961.5 825.8M1941.6 763.0L1957.6 826.8M1937.8 764.0L1953.7 827.8M1933.9 765.0L1949.8 828.7M1930.0 765.9L1945.9 829.7M1926.1 766.9L1942.1 830.7M1922.2 767.9L1938.2 831.7M1918.4 768.8L1934.3 832.6" stroke="#484848" stroke-width="0.8" stroke-opacity="0.95" fill="none"/><polygon points="1985.3,804 2037.9,826 2040,889 2005,891.6 1992,835" fill="url(#gStair)" /><clipPath id="c29"><polygon points="1985.3,804 2037.9,826 2040,889 2005,891.6 1992,835"/></clipPath><path clip-path="url(#c29)" d="M1947.0 806.5L2051.1 780.5M1947.9 809.9L2052.0 783.9M1948.7 813.3L2052.8 787.3M1949.6 816.7L2053.7 790.6M1950.4 820.1L2054.5 794.0M1951.3 823.5L2055.3 797.4M1952.1 826.9L2056.2 800.8M1953.0 830.2L2057.0 804.2M1953.8 833.6L2057.9 807.6M1954.7 837.0L2058.7 811.0M1955.5 840.4L2059.6 814.4M1956.4 843.8L2060.4 817.8M1957.2 847.2L2061.3 821.2M1958.1 850.6L2062.1 824.6M1958.9 854.0L2063.0 828.0M1959.8 857.4L2063.8 831.4M1960.6 860.8L2064.7 834.8M1961.5 864.2L2065.5 838.2M1962.3 867.6L2066.4 841.6M1963.2 871.0L2067.2 845.0M1964.0 874.4L2068.1 848.4M1964.9 877.8L2068.9 851.8M1965.7 881.2L2069.8 855.2M1966.6 884.6L2070.6 858.6M1967.4 888.0L2071.5 862.0M1968.3 891.4L2072.3 865.4M1969.1 894.8L2073.2 868.7M1970.0 898.2L2074.0 872.1M1970.8 901.6L2074.9 875.5M1971.6 905.0L2075.7 878.9M1972.5 908.3L2076.6 882.3M1973.3 911.7L2077.4 885.7M1974.2 915.1L2078.3 889.1M2054.0 782.2L2080.0 886.3M2050.1 783.2L2076.1 887.2M2046.2 784.1L2072.2 888.2M2042.3 785.1L2068.3 889.2M2038.4 786.1L2064.5 890.1M2034.6 787.0L2060.6 891.1M2030.7 788.0L2056.7 892.1M2026.8 789.0L2052.8 893.0M2022.9 789.9L2048.9 894.0M2019.0 790.9L2045.1 895.0M2015.2 791.9L2041.2 896.0M2011.3 792.9L2037.3 896.9M2007.4 793.8L2033.4 897.9M2003.5 794.8L2029.5 898.9M1999.6 795.8L2025.7 899.8M1995.8 796.7L2021.8 900.8M1991.9 797.7L2017.9 901.8M1988.0 798.7L2014.0 902.7M1984.1 799.6L2010.1 903.7M1980.2 800.6L2006.3 904.7M1976.4 801.6L2002.4 905.7M1972.5 802.6L1998.5 906.6M1968.6 803.5L1994.6 907.6M1964.7 804.5L1990.7 908.6M1960.8 805.5L1986.9 909.5M1957.0 806.4L1983.0 910.5M1953.1 807.4L1979.1 911.5M1949.2 808.4L1975.2 912.4M1945.3 809.3L1971.3 913.4" stroke="#484848" stroke-width="0.8" stroke-opacity="0.95" fill="none"/><polygon points="2040,840 2071,857 2086,876 2040,880" fill="url(#gStair)" /><clipPath id="c30"><polygon points="2040,840 2071,857 2086,876 2040,880"/></clipPath><path clip-path="url(#c30)" d="M2023.0 833.9L2086.0 818.2M2023.9 837.3L2086.9 821.6M2024.7 840.7L2087.7 825.0M2025.5 844.1L2088.6 828.4M2026.4 847.5L2089.4 831.7M2027.2 850.9L2090.3 835.1M2028.1 854.3L2091.1 838.5M2028.9 857.7L2092.0 841.9M2029.8 861.1L2092.8 845.3M2030.6 864.5L2093.7 848.7M2031.5 867.9L2094.5 852.1M2032.3 871.3L2095.4 855.5M2033.2 874.7L2096.2 858.9M2034.0 878.1L2097.1 862.3M2034.9 881.5L2097.9 865.7M2035.7 884.9L2098.8 869.1M2036.6 888.3L2099.6 872.5M2037.4 891.6L2100.5 875.9M2038.3 895.0L2101.3 879.3M2039.1 898.4L2102.1 882.7M2040.0 901.8L2103.0 886.1M2090.0 819.8L2105.8 882.8M2086.2 820.7L2101.9 883.7M2082.3 821.7L2098.0 884.7M2078.4 822.7L2094.2 885.7M2074.5 823.6L2090.3 886.7M2070.6 824.6L2086.4 887.6M2066.8 825.6L2082.5 888.6M2062.9 826.5L2078.6 889.6M2059.0 827.5L2074.8 890.5M2055.1 828.5L2070.9 891.5M2051.2 829.5L2067.0 892.5M2047.4 830.4L2063.1 893.5M2043.5 831.4L2059.2 894.4M2039.6 832.4L2055.4 895.4M2035.7 833.3L2051.5 896.4M2031.8 834.3L2047.6 897.3M2028.0 835.3L2043.7 898.3M2024.1 836.3L2039.8 899.3M2020.2 837.2L2036.0 900.2" stroke="#484848" stroke-width="0.8" stroke-opacity="0.95" fill="none"/><polygon points="1928,894 2001,894 1998,907 1986,977 1935,962 1913,920" fill="url(#gStair)" /><clipPath id="c31"><polygon points="1928,894 2001,894 1998,907 1986,977 1935,962 1913,920"/></clipPath><path clip-path="url(#c31)" d="M1881.1 889.5L2002.3 859.2M1882.0 892.9L2003.2 862.6M1882.8 896.3L2004.0 866.0M1883.6 899.7L2004.9 869.4M1884.5 903.1L2005.7 872.8M1885.3 906.5L2006.6 876.2M1886.2 909.9L2007.4 879.6M1887.0 913.3L2008.3 883.0M1887.9 916.7L2009.1 886.4M1888.7 920.1L2010.0 889.8M1889.6 923.5L2010.8 893.2M1890.4 926.9L2011.7 896.6M1891.3 930.3L2012.5 900.0M1892.1 933.7L2013.4 903.4M1893.0 937.1L2014.2 906.8M1893.8 940.5L2015.1 910.2M1894.7 943.9L2015.9 913.6M1895.5 947.3L2016.8 917.0M1896.4 950.7L2017.6 920.3M1897.2 954.0L2018.5 923.7M1898.1 957.4L2019.3 927.1M1898.9 960.8L2020.2 930.5M1899.8 964.2L2021.0 933.9M1900.6 967.6L2021.9 937.3M1901.5 971.0L2022.7 940.7M1902.3 974.4L2023.6 944.1M1903.2 977.8L2024.4 947.5M1904.0 981.2L2025.3 950.9M1904.9 984.6L2026.1 954.3M1905.7 988.0L2027.0 957.7M1906.6 991.4L2027.8 961.1M1907.4 994.8L2028.7 964.5M1908.3 998.2L2029.5 967.9M1909.1 1001.6L2030.4 971.3M1910.0 1005.0L2031.2 974.7M1910.8 1008.4L2032.0 978.1M1911.7 1011.8L2032.9 981.5M2003.9 859.4L2034.2 980.6M2000.1 860.3L2030.4 981.6M1996.2 861.3L2026.5 982.5M1992.3 862.3L2022.6 983.5M1988.4 863.2L2018.7 984.5M1984.5 864.2L2014.8 985.4M1980.7 865.2L2011.0 986.4M1976.8 866.2L2007.1 987.4M1972.9 867.1L2003.2 988.4M1969.0 868.1L1999.3 989.3M1965.1 869.1L1995.4 990.3M1961.2 870.0L1991.6 991.3M1957.4 871.0L1987.7 992.2M1953.5 872.0L1983.8 993.2M1949.6 872.9L1979.9 994.2M1945.7 873.9L1976.0 995.1M1941.8 874.9L1972.2 996.1M1938.0 875.9L1968.3 997.1M1934.1 876.8L1964.4 998.1M1930.2 877.8L1960.5 999.0M1926.3 878.8L1956.6 1000.0M1922.4 879.7L1952.8 1001.0M1918.6 880.7L1948.9 1001.9M1914.7 881.7L1945.0 1002.9M1910.8 882.6L1941.1 1003.9M1906.9 883.6L1937.2 1004.8M1903.0 884.6L1933.3 1005.8M1899.2 885.6L1929.5 1006.8M1895.3 886.5L1925.6 1007.8M1891.4 887.5L1921.7 1008.7M1887.5 888.5L1917.8 1009.7M1883.6 889.4L1913.9 1010.7M1879.8 890.4L1910.1 1011.6" stroke="#484848" stroke-width="0.8" stroke-opacity="0.95" fill="none"/><polygon points="1985,977 2036,997 2038,1049 2001,1060 1996,1010" fill="url(#gStair)" /><clipPath id="c32"><polygon points="1985,977 2036,997 2038,1049 2001,1060 1996,1010"/></clipPath><path clip-path="url(#c32)" d="M1949.1 980.0L2048.5 955.1M1949.9 983.4L2049.3 958.5M1950.8 986.8L2050.2 961.9M1951.6 990.2L2051.0 965.3M1952.5 993.6L2051.9 968.7M1953.3 997.0L2052.7 972.1M1954.2 1000.4L2053.6 975.5M1955.0 1003.8L2054.4 978.9M1955.8 1007.2L2055.3 982.3M1956.7 1010.6L2056.1 985.7M1957.5 1013.9L2057.0 989.1M1958.4 1017.3L2057.8 992.5M1959.2 1020.7L2058.7 995.9M1960.1 1024.1L2059.5 999.3M1960.9 1027.5L2060.4 1002.7M1961.8 1030.9L2061.2 1006.1M1962.6 1034.3L2062.1 1009.5M1963.5 1037.7L2062.9 1012.9M1964.3 1041.1L2063.8 1016.3M1965.2 1044.5L2064.6 1019.7M1966.0 1047.9L2065.5 1023.1M1966.9 1051.3L2066.3 1026.4M1967.7 1054.7L2067.2 1029.8M1968.6 1058.1L2068.0 1033.2M1969.4 1061.5L2068.8 1036.6M1970.3 1064.9L2069.7 1040.0M1971.1 1068.3L2070.5 1043.4M1972.0 1071.7L2071.4 1046.8M1972.8 1075.1L2072.2 1050.2M1973.7 1078.5L2073.1 1053.6M1974.5 1081.9L2073.9 1057.0M2049.5 956.2L2074.4 1055.6M2045.6 957.1L2070.5 1056.6M2041.8 958.1L2066.6 1057.5M2037.9 959.1L2062.7 1058.5M2034.0 960.1L2058.9 1059.5M2030.1 961.0L2055.0 1060.4M2026.2 962.0L2051.1 1061.4M2022.4 963.0L2047.2 1062.4M2018.5 963.9L2043.3 1063.4M2014.6 964.9L2039.4 1064.3M2010.7 965.9L2035.6 1065.3M2006.8 966.9L2031.7 1066.3M2003.0 967.8L2027.8 1067.2M1999.1 968.8L2023.9 1068.2M1995.2 969.8L2020.0 1069.2M1991.3 970.7L2016.2 1070.1M1987.4 971.7L2012.3 1071.1M1983.6 972.7L2008.4 1072.1M1979.7 973.6L2004.5 1073.1M1975.8 974.6L2000.6 1074.0M1971.9 975.6L1996.8 1075.0M1968.0 976.6L1992.9 1076.0M1964.1 977.5L1989.0 1076.9M1960.3 978.5L1985.1 1077.9M1956.4 979.5L1981.2 1078.9M1952.5 980.4L1977.4 1079.9M1948.6 981.4L1973.5 1080.8" stroke="#484848" stroke-width="0.8" stroke-opacity="0.95" fill="none"/><polygon points="1929.8,1078.9 1998.8,1083.7 1990.8,1130.3 1987.5,1162.4 2036.5,1200.9 2036.5,1225 2002,1237.8 1992.4,1191.2 1928.2,1159.1 1913.7,1123.8 1928.2,1096.5" fill="url(#gStair)" /><clipPath id="c33"><polygon points="1929.8,1078.9 1998.8,1083.7 1990.8,1130.3 1987.5,1162.4 2036.5,1200.9 2036.5,1225 2002,1237.8 1992.4,1191.2 1928.2,1159.1 1913.7,1123.8 1928.2,1096.5"/></clipPath><path clip-path="url(#c33)" d="M1850.3 1081.3L2049.0 1031.6M1851.1 1084.7L2049.8 1035.0M1852.0 1088.1L2050.7 1038.4M1852.8 1091.5L2051.5 1041.8M1853.7 1094.9L2052.4 1045.2M1854.5 1098.3L2053.2 1048.6M1855.4 1101.7L2054.1 1052.0M1856.2 1105.1L2054.9 1055.4M1857.1 1108.5L2055.8 1058.8M1857.9 1111.9L2056.6 1062.2M1858.8 1115.3L2057.5 1065.6M1859.6 1118.7L2058.3 1069.0M1860.5 1122.1L2059.2 1072.4M1861.3 1125.5L2060.0 1075.8M1862.2 1128.9L2060.9 1079.2M1863.0 1132.3L2061.7 1082.6M1863.9 1135.7L2062.6 1086.0M1864.7 1139.0L2063.4 1089.4M1865.6 1142.4L2064.3 1092.8M1866.4 1145.8L2065.1 1096.2M1867.3 1149.2L2066.0 1099.6M1868.1 1152.6L2066.8 1103.0M1869.0 1156.0L2067.7 1106.3M1869.8 1159.4L2068.5 1109.7M1870.7 1162.8L2069.4 1113.1M1871.5 1166.2L2070.2 1116.5M1872.4 1169.6L2071.1 1119.9M1873.2 1173.0L2071.9 1123.3M1874.0 1176.4L2072.8 1126.7M1874.9 1179.8L2073.6 1130.1M1875.7 1183.2L2074.5 1133.5M1876.6 1186.6L2075.3 1136.9M1877.4 1190.0L2076.2 1140.3M1878.3 1193.4L2077.0 1143.7M1879.1 1196.8L2077.8 1147.1M1880.0 1200.2L2078.7 1150.5M1880.8 1203.6L2079.5 1153.9M1881.7 1207.0L2080.4 1157.3M1882.5 1210.4L2081.2 1160.7M1883.4 1213.7L2082.1 1164.1M1884.2 1217.1L2082.9 1167.5M1885.1 1220.5L2083.8 1170.9M1885.9 1223.9L2084.6 1174.3M1886.8 1227.3L2085.5 1177.7M1887.6 1230.7L2086.3 1181.0M1888.5 1234.1L2087.2 1184.4M1889.3 1237.5L2088.0 1187.8M1890.2 1240.9L2088.9 1191.2M1891.0 1244.3L2089.7 1194.6M1891.9 1247.7L2090.6 1198.0M1892.7 1251.1L2091.4 1201.4M1893.6 1254.5L2092.3 1204.8M1894.4 1257.9L2093.1 1208.2M1895.3 1261.3L2094.0 1211.6M1896.1 1264.7L2094.8 1215.0M1897.0 1268.1L2095.7 1218.4M1897.8 1271.5L2096.5 1221.8M1898.7 1274.9L2097.4 1225.2M1899.5 1278.3L2098.2 1228.6M1900.4 1281.7L2099.1 1232.0M1901.2 1285.1L2099.9 1235.4M2051.2 1033.8L2100.8 1232.5M2047.3 1034.7L2097.0 1233.4M2043.4 1035.7L2093.1 1234.4M2039.5 1036.7L2089.2 1235.4M2035.6 1037.7L2085.3 1236.4M2031.8 1038.6L2081.4 1237.3M2027.9 1039.6L2077.5 1238.3M2024.0 1040.6L2073.7 1239.3M2020.1 1041.5L2069.8 1240.2M2016.2 1042.5L2065.9 1241.2M2012.4 1043.5L2062.0 1242.2M2008.5 1044.4L2058.1 1243.2M2004.6 1045.4L2054.3 1244.1M2000.7 1046.4L2050.4 1245.1M1996.8 1047.4L2046.5 1246.1M1992.9 1048.3L2042.6 1247.0M1989.1 1049.3L2038.7 1248.0M1985.2 1050.3L2034.9 1249.0M1981.3 1051.2L2031.0 1249.9M1977.4 1052.2L2027.1 1250.9M1973.5 1053.2L2023.2 1251.9M1969.7 1054.1L2019.3 1252.9M1965.8 1055.1L2015.5 1253.8M1961.9 1056.1L2011.6 1254.8M1958.0 1057.1L2007.7 1255.8M1954.1 1058.0L2003.8 1256.7M1950.3 1059.0L1999.9 1257.7M1946.4 1060.0L1996.1 1258.7M1942.5 1060.9L1992.2 1259.6M1938.6 1061.9L1988.3 1260.6M1934.7 1062.9L1984.4 1261.6M1930.9 1063.8L1980.5 1262.6M1927.0 1064.8L1976.7 1263.5M1923.1 1065.8L1972.8 1264.5M1919.2 1066.8L1968.9 1265.5M1915.3 1067.7L1965.0 1266.4M1911.5 1068.7L1961.1 1267.4M1907.6 1069.7L1957.3 1268.4M1903.7 1070.6L1953.4 1269.3M1899.8 1071.6L1949.5 1270.3M1895.9 1072.6L1945.6 1271.3M1892.1 1073.5L1941.7 1272.3M1888.2 1074.5L1937.8 1273.2M1884.3 1075.5L1934.0 1274.2M1880.4 1076.5L1930.1 1275.2M1876.5 1077.4L1926.2 1276.1M1872.7 1078.4L1922.3 1277.1M1868.8 1079.4L1918.4 1278.1M1864.9 1080.3L1914.6 1279.0M1861.0 1081.3L1910.7 1280.0M1857.1 1082.3L1906.8 1281.0M1853.2 1083.3L1902.9 1282.0M1849.4 1084.2L1899.0 1282.9" stroke="#484848" stroke-width="0.8" stroke-opacity="0.95" fill="none"/><polygon points="1799.3,171.5 1904,157.3 1899.5,264.3 1877.3,264.3 1847,231" fill="url(#gRoofL)" /><clipPath id="c34"><polygon points="1799.3,171.5 1904,157.3 1899.5,264.3 1877.3,264.3 1847,231"/></clipPath><path clip-path="url(#c34)" d="M1764.7 144.2L1916.9 122.9M1766.5 157.1L1918.7 135.8M1768.3 170.0L1920.5 148.6M1770.1 182.8L1922.4 161.5M1771.9 195.7L1924.2 174.4M1773.7 208.6L1926.0 187.3M1775.5 221.5L1927.8 200.1M1777.3 234.3L1929.6 213.0M1779.1 247.2L1931.4 225.9M1780.9 260.1L1933.2 238.8M1782.8 273.0L1935.0 251.6M1784.6 285.8L1936.8 264.5M1786.4 298.7L1938.6 277.4M1867.9 102.5L1960.2 225.5M1857.5 110.3L1949.8 233.3M1847.1 118.1L1939.4 241.1M1836.7 125.9L1929.0 248.9M1826.3 133.7L1918.6 256.7M1815.9 141.5L1908.2 264.5M1805.5 149.3L1897.8 272.3M1795.1 157.1L1887.4 280.1M1784.7 164.9L1877.0 287.9M1774.3 172.7L1866.6 295.7M1763.9 180.5L1856.2 303.5M1753.5 188.3L1845.8 311.3M1743.1 196.1L1835.4 319.1" stroke="#4a4a4a" stroke-width="0.9" stroke-opacity="0.9" fill="none"/><polygon points="1904,157.3 2051.7,136.6 2098.4,235.7 2048.5,248.4 1943.9,259.5 1944,216.7" fill="url(#gRoofR)" /><clipPath id="c35"><polygon points="1904,157.3 2051.7,136.6 2098.4,235.7 2048.5,248.4 1943.9,259.5 1944,216.7"/></clipPath><path clip-path="url(#c35)" d="M1869.1 98.4L2100.8 66.0M1870.9 111.3L2102.6 78.8M1872.7 124.2L2104.4 91.7M1874.5 137.0L2106.3 104.6M1876.3 149.9L2108.1 117.5M1878.1 162.8L2109.9 130.3M1879.9 175.6L2111.7 143.2M1881.7 188.5L2113.5 156.1M1883.5 201.4L2115.3 169.0M1885.3 214.3L2117.1 181.8M1887.1 227.1L2118.9 194.7M1888.9 240.0L2120.7 207.6M1890.7 252.9L2122.5 220.5M1892.5 265.8L2124.3 233.3M1894.3 278.6L2126.1 246.2M1896.1 291.5L2127.9 259.1M1898.0 304.4L2129.7 271.9M1899.8 317.3L2131.5 284.8M1901.6 330.1L2133.3 297.7M2024.6 34.3L2165.0 221.4M2014.2 42.1L2154.6 229.2M2003.8 49.9L2144.2 237.0M1993.4 57.7L2133.8 244.8M1983.0 65.5L2123.4 252.6M1972.6 73.3L2113.0 260.4M1962.2 81.1L2102.6 268.2M1951.8 88.9L2092.2 276.0M1941.4 96.7L2081.8 283.8M1931.0 104.5L2071.4 291.6M1920.6 112.3L2061.0 299.4M1910.2 120.1L2050.6 307.2M1899.8 127.9L2040.2 315.0M1889.4 135.7L2029.8 322.8M1879.0 143.5L2019.4 330.6M1868.6 151.3L2009.0 338.4M1858.2 159.1L1998.6 346.2M1847.8 166.9L1988.2 354.0M1837.4 174.7L1977.8 361.8" stroke="#4a4a4a" stroke-width="0.9" stroke-opacity="0.9" fill="none"/><polygon points="1799,171 1847,231 1845,280 1841,427 1838,560 1836.4,700 1830.4,1030 1827.7,1238.8 1775.4,1265 1777,1030 1783.5,700 1788,560 1791,394 1794,280" fill="url(#gWallL)" /><clipPath id="c36"><polygon points="1799,171 1847,231 1845,280 1841,427 1838,560 1836.4,700 1830.4,1030 1827.7,1238.8 1775.4,1265 1777,1030 1783.5,700 1788,560 1791,394 1794,280"/></clipPath><path clip-path="url(#c36)" d="M2382.4 184.7L2349.5 1284.6M2375.0 184.5L2342.0 1284.3M2367.5 184.3L2334.5 1284.1M2360.0 184.0L2327.0 1283.9M2352.5 183.8L2319.5 1283.7M2345.0 183.6L2312.0 1283.4M2337.5 183.4L2304.5 1283.2M2330.0 183.1L2297.0 1283.0M2322.5 182.9L2289.5 1282.8M2315.0 182.7L2282.0 1282.5M2307.5 182.5L2274.5 1282.3M2300.0 182.2L2267.0 1282.1M2292.5 182.0L2259.5 1281.9M2285.0 181.8L2252.0 1281.6M2277.5 181.6L2244.5 1281.4M2270.0 181.3L2237.0 1281.2M2262.5 181.1L2229.5 1281.0M2255.0 180.9L2222.0 1280.7M2247.5 180.7L2214.5 1280.5M2240.0 180.4L2207.0 1280.3M2232.5 180.2L2199.5 1280.1M2225.0 180.0L2192.0 1279.8M2217.5 179.8L2184.5 1279.6M2210.0 179.5L2177.0 1279.4M2202.5 179.3L2169.5 1279.2M2195.0 179.1L2162.0 1278.9M2187.5 178.9L2154.5 1278.7M2180.0 178.6L2147.0 1278.5M2172.5 178.4L2139.5 1278.3M2165.0 178.2L2132.1 1278.0M2157.5 178.0L2124.6 1277.8M2150.1 177.7L2117.1 1277.6M2142.6 177.5L2109.6 1277.4M2135.1 177.3L2102.1 1277.1M2127.6 177.1L2094.6 1276.9M2120.1 176.8L2087.1 1276.7M2112.6 176.6L2079.6 1276.5M2105.1 176.4L2072.1 1276.2M2097.6 176.2L2064.6 1276.0M2090.1 175.9L2057.1 1275.8M2082.6 175.7L2049.6 1275.6M2075.1 175.5L2042.1 1275.3M2067.6 175.3L2034.6 1275.1M2060.1 175.0L2027.1 1274.9M2052.6 174.8L2019.6 1274.7M2045.1 174.6L2012.1 1274.4M2037.6 174.4L2004.6 1274.2M2030.1 174.1L1997.1 1274.0M2022.6 173.9L1989.6 1273.8M2015.1 173.7L1982.1 1273.5M2007.6 173.5L1974.6 1273.3M2000.1 173.2L1967.1 1273.1M1992.6 173.0L1959.6 1272.9M1985.1 172.8L1952.1 1272.6M1977.6 172.6L1944.6 1272.4M1970.1 172.4L1937.1 1272.2M1962.6 172.1L1929.6 1272.0M1955.1 171.9L1922.1 1271.7M1947.6 171.7L1914.6 1271.5M1940.1 171.5L1907.2 1271.3M1932.7 171.2L1899.7 1271.1M1925.2 171.0L1892.2 1270.8M1917.7 170.8L1884.7 1270.6M1910.2 170.6L1877.2 1270.4M1902.7 170.3L1869.7 1270.2M1895.2 170.1L1862.2 1269.9M1887.7 169.9L1854.7 1269.7M1880.2 169.7L1847.2 1269.5M1872.7 169.4L1839.7 1269.3M1865.2 169.2L1832.2 1269.0M1857.7 169.0L1824.7 1268.8M1850.2 168.8L1817.2 1268.6M1842.7 168.5L1809.7 1268.4M1835.2 168.3L1802.2 1268.1M1827.7 168.1L1794.7 1267.9M1820.2 167.9L1787.2 1267.7M1812.7 167.6L1779.7 1267.5M1805.2 167.4L1772.2 1267.2M1797.7 167.2L1764.7 1267.0M1790.2 167.0L1757.2 1266.8M1782.7 166.7L1749.7 1266.6M1775.2 166.5L1742.2 1266.3M1767.7 166.3L1734.7 1266.1M1760.2 166.1L1727.2 1265.9M1752.7 165.8L1719.7 1265.7M1745.2 165.6L1712.2 1265.4M1737.7 165.4L1704.7 1265.2M1730.2 165.2L1697.2 1265.0M1722.7 164.9L1689.7 1264.8M1715.2 164.7L1682.3 1264.5M1707.8 164.5L1674.8 1264.3M1700.3 164.3L1667.3 1264.1M1692.8 164.0L1659.8 1263.9M1685.3 163.8L1652.3 1263.6M1677.8 163.6L1644.8 1263.4M1670.3 163.4L1637.3 1263.2M1662.8 163.1L1629.8 1263.0M1655.3 162.9L1622.3 1262.8M1647.8 162.7L1614.8 1262.5M1640.3 162.5L1607.3 1262.3M1632.8 162.2L1599.8 1262.1M1625.3 162.0L1592.3 1261.9M1617.8 161.8L1584.8 1261.6M1610.3 161.6L1577.3 1261.4M1602.8 161.3L1569.8 1261.2M1595.3 161.1L1562.3 1261.0M1587.8 160.9L1554.8 1260.7M1580.3 160.7L1547.3 1260.5M1572.8 160.4L1539.8 1260.3M1565.3 160.2L1532.3 1260.1M1557.8 160.0L1524.8 1259.8M1550.3 159.8L1517.3 1259.6M1542.8 159.5L1509.8 1259.4M1535.3 159.3L1502.3 1259.2M1527.8 159.1L1494.8 1258.9M1520.3 158.9L1487.3 1258.7M1512.8 158.6L1479.8 1258.5M1505.3 158.4L1472.3 1258.3M1497.8 158.2L1464.9 1258.0M1490.3 158.0L1457.4 1257.8M1482.9 157.7L1449.9 1257.6M1475.4 157.5L1442.4 1257.4M1467.9 157.3L1434.9 1257.1M1460.4 157.1L1427.4 1256.9M1452.9 156.8L1419.9 1256.7M1445.4 156.6L1412.4 1256.5M1437.9 156.4L1404.9 1256.2M1430.4 156.2L1397.4 1256.0M1422.9 155.9L1389.9 1255.8M1415.4 155.7L1382.4 1255.6M1407.9 155.5L1374.9 1255.3M1400.4 155.3L1367.4 1255.1M1392.9 155.0L1359.9 1254.9M1385.4 154.8L1352.4 1254.7M1377.9 154.6L1344.9 1254.4M1370.4 154.4L1337.4 1254.2M1362.9 154.1L1329.9 1254.0M1355.4 153.9L1322.4 1253.8M1347.9 153.7L1314.9 1253.5M1340.4 153.5L1307.4 1253.3M1332.9 153.2L1299.9 1253.1M1325.4 153.0L1292.4 1252.9M1317.9 152.8L1284.9 1252.6M1310.4 152.6L1277.4 1252.4M1302.9 152.3L1269.9 1252.2M1295.4 152.1L1262.4 1252.0M1287.9 151.9L1254.9 1251.7M1280.4 151.7L1247.4 1251.5M1272.9 151.4L1240.0 1251.3M1159.5 265.0L2238.5 49.2M1163.8 286.6L2242.8 70.8M1168.2 308.2L2247.1 92.4M1172.5 329.7L2251.5 113.9M1176.8 351.3L2255.8 135.5M1181.1 372.9L2260.1 157.1M1185.4 394.4L2264.4 178.6M1189.7 416.0L2268.7 200.2M1194.1 437.6L2273.0 221.8M1198.4 459.2L2277.3 243.4M1202.7 480.7L2281.7 264.9M1207.0 502.3L2286.0 286.5M1211.3 523.9L2290.3 308.1M1215.6 545.5L2294.6 329.7M1219.9 567.0L2298.9 351.2M1224.3 588.6L2303.2 372.8M1228.6 610.2L2307.5 394.4M1232.9 631.7L2311.9 415.9M1237.2 653.3L2316.2 437.5M1241.5 674.9L2320.5 459.1M1245.8 696.5L2324.8 480.7M1250.1 718.0L2329.1 502.2M1254.5 739.6L2333.4 523.8M1258.8 761.2L2337.7 545.4M1263.1 782.8L2342.1 567.0M1267.4 804.3L2346.4 588.5M1271.7 825.9L2350.7 610.1M1276.0 847.5L2355.0 631.7M1280.3 869.0L2359.3 653.2M1284.7 890.6L2363.6 674.8M1289.0 912.2L2367.9 696.4M1293.3 933.8L2372.3 718.0M1297.6 955.3L2376.6 739.5M1301.9 976.9L2380.9 761.1M1306.2 998.5L2385.2 782.7M1310.5 1020.1L2389.5 804.3M1314.9 1041.6L2393.8 825.8M1319.2 1063.2L2398.1 847.4M1323.5 1084.8L2402.5 869.0M1327.8 1106.3L2406.8 890.5M1332.1 1127.9L2411.1 912.1M1336.4 1149.5L2415.4 933.7M1340.7 1171.1L2419.7 955.3M1345.1 1192.6L2424.0 976.8M1349.4 1214.2L2428.3 998.4M1353.7 1235.8L2432.7 1020.0M1358.0 1257.4L2437.0 1041.6M1362.3 1278.9L2441.3 1063.1M1366.6 1300.5L2445.6 1084.7M1370.9 1322.1L2449.9 1106.3M1375.3 1343.6L2454.2 1127.8M1379.6 1365.2L2458.6 1149.4M1383.9 1386.8L2462.9 1171.0" stroke="#4a4a4a" stroke-width="0.9" stroke-opacity="0.9" fill="none"/><polygon points="1904,157 1944,217 1942,280 1937.9,423 1935.8,560 1931.7,810 1928,1140 1926.5,1247.5 1883,1289.7 1884.4,1140 1887.7,810 1893,560 1896,423 1899,280" fill="url(#gWallM)" /><clipPath id="c37"><polygon points="1904,157 1944,217 1942,280 1937.9,423 1935.8,560 1931.7,810 1928,1140 1926.5,1247.5 1883,1289.7 1884.4,1140 1887.7,810 1893,560 1896,423 1899,280"/></clipPath><path clip-path="url(#c37)" d="M2500.3 171.5L2466.2 1309.4M2492.8 171.3L2458.7 1309.1M2485.3 171.1L2451.2 1308.9M2477.8 170.9L2443.7 1308.7M2470.3 170.6L2436.2 1308.5M2462.8 170.4L2428.7 1308.2M2455.3 170.2L2421.2 1308.0M2447.8 170.0L2413.7 1307.8M2440.3 169.7L2406.2 1307.6M2432.8 169.5L2398.7 1307.3M2425.3 169.3L2391.2 1307.1M2417.8 169.1L2383.7 1306.9M2410.4 168.8L2376.2 1306.7M2402.9 168.6L2368.7 1306.4M2395.4 168.4L2361.2 1306.2M2387.9 168.2L2353.7 1306.0M2380.4 167.9L2346.2 1305.8M2372.9 167.7L2338.7 1305.5M2365.4 167.5L2331.2 1305.3M2357.9 167.3L2323.7 1305.1M2350.4 167.0L2316.2 1304.9M2342.9 166.8L2308.7 1304.6M2335.4 166.6L2301.3 1304.4M2327.9 166.4L2293.8 1304.2M2320.4 166.1L2286.3 1304.0M2312.9 165.9L2278.8 1303.7M2305.4 165.7L2271.3 1303.5M2297.9 165.5L2263.8 1303.3M2290.4 165.2L2256.3 1303.1M2282.9 165.0L2248.8 1302.8M2275.4 164.8L2241.3 1302.6M2267.9 164.6L2233.8 1302.4M2260.4 164.3L2226.3 1302.2M2252.9 164.1L2218.8 1301.9M2245.4 163.9L2211.3 1301.7M2237.9 163.7L2203.8 1301.5M2230.4 163.4L2196.3 1301.3M2222.9 163.2L2188.8 1301.0M2215.4 163.0L2181.3 1300.8M2207.9 162.8L2173.8 1300.6M2200.4 162.5L2166.3 1300.4M2192.9 162.3L2158.8 1300.1M2185.5 162.1L2151.3 1299.9M2178.0 161.9L2143.8 1299.7M2170.5 161.6L2136.3 1299.5M2163.0 161.4L2128.8 1299.2M2155.5 161.2L2121.3 1299.0M2148.0 161.0L2113.8 1298.8M2140.5 160.7L2106.3 1298.6M2133.0 160.5L2098.8 1298.3M2125.5 160.3L2091.3 1298.1M2118.0 160.1L2083.8 1297.9M2110.5 159.8L2076.4 1297.7M2103.0 159.6L2068.9 1297.4M2095.5 159.4L2061.4 1297.2M2088.0 159.2L2053.9 1297.0M2080.5 158.9L2046.4 1296.8M2073.0 158.7L2038.9 1296.5M2065.5 158.5L2031.4 1296.3M2058.0 158.3L2023.9 1296.1M2050.5 158.0L2016.4 1295.9M2043.0 157.8L2008.9 1295.6M2035.5 157.6L2001.4 1295.4M2028.0 157.4L1993.9 1295.2M2020.5 157.1L1986.4 1295.0M2013.0 156.9L1978.9 1294.7M2005.5 156.7L1971.4 1294.5M1998.0 156.5L1963.9 1294.3M1990.5 156.2L1956.4 1294.1M1983.0 156.0L1948.9 1293.8M1975.5 155.8L1941.4 1293.6M1968.1 155.6L1933.9 1293.4M1960.6 155.3L1926.4 1293.2M1953.1 155.1L1918.9 1292.9M1945.6 154.9L1911.4 1292.7M1938.1 154.7L1903.9 1292.5M1930.6 154.4L1896.4 1292.3M1923.1 154.2L1888.9 1292.0M1915.6 154.0L1881.4 1291.8M1908.1 153.8L1873.9 1291.6M1900.6 153.5L1866.4 1291.4M1893.1 153.3L1858.9 1291.1M1885.6 153.1L1851.5 1290.9M1878.1 152.9L1844.0 1290.7M1870.6 152.6L1836.5 1290.5M1863.1 152.4L1829.0 1290.2M1855.6 152.2L1821.5 1290.0M1848.1 152.0L1814.0 1289.8M1840.6 151.7L1806.5 1289.6M1833.1 151.5L1799.0 1289.3M1825.6 151.3L1791.5 1289.1M1818.1 151.1L1784.0 1288.9M1810.6 150.8L1776.5 1288.7M1803.1 150.6L1769.0 1288.4M1795.6 150.4L1761.5 1288.2M1788.1 150.2L1754.0 1288.0M1780.6 149.9L1746.5 1287.8M1773.1 149.7L1739.0 1287.5M1765.6 149.5L1731.5 1287.3M1758.1 149.3L1724.0 1287.1M1750.6 149.0L1716.5 1286.9M1743.2 148.8L1709.0 1286.6M1735.7 148.6L1701.5 1286.4M1728.2 148.4L1694.0 1286.2M1720.7 148.1L1686.5 1286.0M1713.2 147.9L1679.0 1285.7M1705.7 147.7L1671.5 1285.5M1698.2 147.5L1664.0 1285.3M1690.7 147.2L1656.5 1285.1M1683.2 147.0L1649.0 1284.8M1675.7 146.8L1641.5 1284.6M1668.2 146.6L1634.1 1284.4M1660.7 146.3L1626.6 1284.2M1653.2 146.1L1619.1 1283.9M1645.7 145.9L1611.6 1283.7M1638.2 145.7L1604.1 1283.5M1630.7 145.4L1596.6 1283.3M1623.2 145.2L1589.1 1283.0M1615.7 145.0L1581.6 1282.8M1608.2 144.8L1574.1 1282.6M1600.7 144.5L1566.6 1282.4M1593.2 144.3L1559.1 1282.1M1585.7 144.1L1551.6 1281.9M1578.2 143.9L1544.1 1281.7M1570.7 143.6L1536.6 1281.5M1563.2 143.4L1529.1 1281.2M1555.7 143.2L1521.6 1281.0M1548.2 143.0L1514.1 1280.8M1540.7 142.7L1506.6 1280.6M1533.2 142.5L1499.1 1280.3M1525.7 142.3L1491.6 1280.1M1518.3 142.1L1484.1 1279.9M1510.8 141.8L1476.6 1279.7M1503.3 141.6L1469.1 1279.4M1495.8 141.4L1461.6 1279.2M1488.3 141.2L1454.1 1279.0M1480.8 140.9L1446.6 1278.8M1473.3 140.7L1439.1 1278.5M1465.8 140.5L1431.6 1278.3M1458.3 140.3L1424.1 1278.1M1450.8 140.0L1416.6 1277.9M1443.3 139.8L1409.2 1277.6M1435.8 139.6L1401.7 1277.4M1428.3 139.4L1394.2 1277.2M1420.8 139.1L1386.7 1277.0M1413.3 138.9L1379.2 1276.7M1405.8 138.7L1371.7 1276.5M1398.3 138.5L1364.2 1276.3M1390.8 138.2L1356.7 1276.1M1383.3 138.0L1349.2 1275.8M1375.8 137.8L1341.7 1275.6M1368.3 137.6L1334.2 1275.4M1360.8 137.3L1326.7 1275.2M1243.2 274.1L2359.4 50.8M1247.5 295.7L2363.8 72.4M1251.8 317.2L2368.1 94.0M1256.1 338.8L2372.4 115.6M1260.5 360.4L2376.7 137.1M1264.8 381.9L2381.0 158.7M1269.1 403.5L2385.3 180.3M1273.4 425.1L2389.6 201.8M1277.7 446.7L2394.0 223.4M1282.0 468.2L2398.3 245.0M1286.3 489.8L2402.6 266.6M1290.7 511.4L2406.9 288.1M1295.0 533.0L2411.2 309.7M1299.3 554.5L2415.5 331.3M1303.6 576.1L2419.8 352.9M1307.9 597.7L2424.2 374.4M1312.2 619.2L2428.5 396.0M1316.6 640.8L2432.8 417.6M1320.9 662.4L2437.1 439.1M1325.2 684.0L2441.4 460.7M1329.5 705.5L2445.7 482.3M1333.8 727.1L2450.0 503.9M1338.1 748.7L2454.4 525.4M1342.4 770.3L2458.7 547.0M1346.8 791.8L2463.0 568.6M1351.1 813.4L2467.3 590.2M1355.4 835.0L2471.6 611.7M1359.7 856.5L2475.9 633.3M1364.0 878.1L2480.2 654.9M1368.3 899.7L2484.6 676.4M1372.6 921.3L2488.9 698.0M1377.0 942.8L2493.2 719.6M1381.3 964.4L2497.5 741.2M1385.6 986.0L2501.8 762.7M1389.9 1007.6L2506.1 784.3M1394.2 1029.1L2510.4 805.9M1398.5 1050.7L2514.8 827.5M1402.8 1072.3L2519.1 849.0M1407.2 1093.8L2523.4 870.6M1411.5 1115.4L2527.7 892.2M1415.8 1137.0L2532.0 913.7M1420.1 1158.6L2536.3 935.3M1424.4 1180.1L2540.7 956.9M1428.7 1201.7L2545.0 978.5M1433.0 1223.3L2549.3 1000.0M1437.4 1244.9L2553.6 1021.6M1441.7 1266.4L2557.9 1043.2M1446.0 1288.0L2562.2 1064.8M1450.3 1309.6L2566.5 1086.3M1454.6 1331.1L2570.9 1107.9M1458.9 1352.7L2575.2 1129.5M1463.2 1374.3L2579.5 1151.0M1467.6 1395.9L2583.8 1172.6" stroke="#4a4a4a" stroke-width="0.9" stroke-opacity="0.9" fill="none"/><polygon points="2051.7,136.6 2081.8,199 2078.8,280 2075.7,560 2072,690 2069,1140 2067.5,1262 2035.5,1298.4 2037,1140 2041.8,700 2043,560 2045,423 2048,280" fill="url(#gWallR)" /><clipPath id="c38"><polygon points="2051.7,136.6 2081.8,199 2078.8,280 2075.7,560 2072,690 2069,1140 2067.5,1262 2035.5,1298.4 2037,1140 2041.8,700 2043,560 2045,423 2048,280"/></clipPath><path clip-path="url(#c38)" d="M2660.9 151.9L2625.9 1318.1M2653.4 151.7L2618.4 1317.9M2645.9 151.5L2610.9 1317.7M2638.4 151.3L2603.4 1317.5M2630.9 151.0L2595.9 1317.2M2623.4 150.8L2588.4 1317.0M2615.9 150.6L2580.9 1316.8M2608.4 150.4L2573.4 1316.6M2600.9 150.1L2565.9 1316.3M2593.4 149.9L2558.4 1316.1M2585.9 149.7L2550.9 1315.9M2578.4 149.5L2543.4 1315.7M2570.9 149.2L2535.9 1315.4M2563.4 149.0L2528.4 1315.2M2555.9 148.8L2520.9 1315.0M2548.4 148.6L2513.4 1314.8M2540.9 148.3L2505.9 1314.5M2533.4 148.1L2498.5 1314.3M2525.9 147.9L2491.0 1314.1M2518.4 147.7L2483.5 1313.9M2510.9 147.4L2476.0 1313.6M2503.5 147.2L2468.5 1313.4M2496.0 147.0L2461.0 1313.2M2488.5 146.8L2453.5 1313.0M2481.0 146.5L2446.0 1312.7M2473.5 146.3L2438.5 1312.5M2466.0 146.1L2431.0 1312.3M2458.5 145.9L2423.5 1312.1M2451.0 145.6L2416.0 1311.8M2443.5 145.4L2408.5 1311.6M2436.0 145.2L2401.0 1311.4M2428.5 145.0L2393.5 1311.2M2421.0 144.7L2386.0 1310.9M2413.5 144.5L2378.5 1310.7M2406.0 144.3L2371.0 1310.5M2398.5 144.1L2363.5 1310.3M2391.0 143.8L2356.0 1310.0M2383.5 143.6L2348.5 1309.8M2376.0 143.4L2341.0 1309.6M2368.5 143.2L2333.5 1309.4M2361.0 142.9L2326.0 1309.1M2353.5 142.7L2318.5 1308.9M2346.0 142.5L2311.0 1308.7M2338.5 142.3L2303.5 1308.5M2331.0 142.0L2296.0 1308.2M2323.5 141.8L2288.5 1308.0M2316.0 141.6L2281.0 1307.8M2308.5 141.4L2273.6 1307.6M2301.0 141.1L2266.1 1307.3M2293.5 140.9L2258.6 1307.1M2286.0 140.7L2251.1 1306.9M2278.6 140.5L2243.6 1306.7M2271.1 140.2L2236.1 1306.4M2263.6 140.0L2228.6 1306.2M2256.1 139.8L2221.1 1306.0M2248.6 139.6L2213.6 1305.8M2241.1 139.3L2206.1 1305.5M2233.6 139.1L2198.6 1305.3M2226.1 138.9L2191.1 1305.1M2218.6 138.7L2183.6 1304.9M2211.1 138.4L2176.1 1304.6M2203.6 138.2L2168.6 1304.4M2196.1 138.0L2161.1 1304.2M2188.6 137.8L2153.6 1304.0M2181.1 137.5L2146.1 1303.7M2173.6 137.3L2138.6 1303.5M2166.1 137.1L2131.1 1303.3M2158.6 136.9L2123.6 1303.1M2151.1 136.7L2116.1 1302.8M2143.6 136.4L2108.6 1302.6M2136.1 136.2L2101.1 1302.4M2128.6 136.0L2093.6 1302.2M2121.1 135.8L2086.1 1301.9M2113.6 135.5L2078.6 1301.7M2106.1 135.3L2071.1 1301.5M2098.6 135.1L2063.6 1301.3M2091.1 134.9L2056.2 1301.0M2083.6 134.6L2048.7 1300.8M2076.1 134.4L2041.2 1300.6M2068.6 134.2L2033.7 1300.4M2061.1 134.0L2026.2 1300.1M2053.7 133.7L2018.7 1299.9M2046.2 133.5L2011.2 1299.7M2038.7 133.3L2003.7 1299.5M2031.2 133.1L1996.2 1299.2M2023.7 132.8L1988.7 1299.0M2016.2 132.6L1981.2 1298.8M2008.7 132.4L1973.7 1298.6M2001.2 132.2L1966.2 1298.3M1993.7 131.9L1958.7 1298.1M1986.2 131.7L1951.2 1297.9M1978.7 131.5L1943.7 1297.7M1971.2 131.3L1936.2 1297.5M1963.7 131.0L1928.7 1297.2M1956.2 130.8L1921.2 1297.0M1948.7 130.6L1913.7 1296.8M1941.2 130.4L1906.2 1296.6M1933.7 130.1L1898.7 1296.3M1926.2 129.9L1891.2 1296.1M1918.7 129.7L1883.7 1295.9M1911.2 129.5L1876.2 1295.7M1903.7 129.2L1868.7 1295.4M1896.2 129.0L1861.2 1295.2M1888.7 128.8L1853.7 1295.0M1881.2 128.6L1846.2 1294.8M1873.7 128.3L1838.7 1294.5M1866.2 128.1L1831.3 1294.3M1858.7 127.9L1823.8 1294.1M1851.2 127.7L1816.3 1293.9M1843.7 127.4L1808.8 1293.6M1836.3 127.2L1801.3 1293.4M1828.8 127.0L1793.8 1293.2M1821.3 126.8L1786.3 1293.0M1813.8 126.5L1778.8 1292.7M1806.3 126.3L1771.3 1292.5M1798.8 126.1L1763.8 1292.3M1791.3 125.9L1756.3 1292.1M1783.8 125.6L1748.8 1291.8M1776.3 125.4L1741.3 1291.6M1768.8 125.2L1733.8 1291.4M1761.3 125.0L1726.3 1291.2M1753.8 124.7L1718.8 1290.9M1746.3 124.5L1711.3 1290.7M1738.8 124.3L1703.8 1290.5M1731.3 124.1L1696.3 1290.3M1723.8 123.8L1688.8 1290.0M1716.3 123.6L1681.3 1289.8M1708.8 123.4L1673.8 1289.6M1701.3 123.2L1666.3 1289.4M1693.8 122.9L1658.8 1289.1M1686.3 122.7L1651.3 1288.9M1678.8 122.5L1643.8 1288.7M1671.3 122.3L1636.3 1288.5M1663.8 122.0L1628.8 1288.2M1656.3 121.8L1621.3 1288.0M1648.8 121.6L1613.8 1287.8M1641.3 121.4L1606.4 1287.6M1633.8 121.1L1598.9 1287.3M1626.3 120.9L1591.4 1287.1M1618.8 120.7L1583.9 1286.9M1611.4 120.5L1576.4 1286.7M1603.9 120.2L1568.9 1286.4M1596.4 120.0L1561.4 1286.2M1588.9 119.8L1553.9 1286.0M1581.4 119.6L1546.4 1285.8M1573.9 119.3L1538.9 1285.5M1566.4 119.1L1531.4 1285.3M1558.9 118.9L1523.9 1285.1M1551.4 118.7L1516.4 1284.9M1543.9 118.4L1508.9 1284.6M1536.4 118.2L1501.4 1284.4M1528.9 118.0L1493.9 1284.2M1521.4 117.8L1486.4 1284.0M1513.9 117.5L1478.9 1283.7M1506.4 117.3L1471.4 1283.5M1498.9 117.1L1463.9 1283.3M1491.4 116.9L1456.4 1283.1M1370.1 249.4L2514.2 20.6M1374.4 271.0L2518.5 42.2M1378.8 292.6L2522.8 63.8M1383.1 314.2L2527.1 85.3M1387.4 335.7L2531.4 106.9M1391.7 357.3L2535.8 128.5M1396.0 378.9L2540.1 150.1M1400.3 400.5L2544.4 171.6M1404.6 422.0L2548.7 193.2M1409.0 443.6L2553.0 214.8M1413.3 465.2L2557.3 236.4M1417.6 486.7L2561.6 257.9M1421.9 508.3L2566.0 279.5M1426.2 529.9L2570.3 301.1M1430.5 551.5L2574.6 322.6M1434.8 573.0L2578.9 344.2M1439.2 594.6L2583.2 365.8M1443.5 616.2L2587.5 387.4M1447.8 637.8L2591.9 408.9M1452.1 659.3L2596.2 430.5M1456.4 680.9L2600.5 452.1M1460.7 702.5L2604.8 473.7M1465.0 724.0L2609.1 495.2M1469.4 745.6L2613.4 516.8M1473.7 767.2L2617.7 538.4M1478.0 788.8L2622.1 559.9M1482.3 810.3L2626.4 581.5M1486.6 831.9L2630.7 603.1M1490.9 853.5L2635.0 624.7M1495.2 875.1L2639.3 646.2M1499.6 896.6L2643.6 667.8M1503.9 918.2L2647.9 689.4M1508.2 939.8L2652.3 711.0M1512.5 961.3L2656.6 732.5M1516.8 982.9L2660.9 754.1M1521.1 1004.5L2665.2 775.7M1525.4 1026.1L2669.5 797.2M1529.8 1047.6L2673.8 818.8M1534.1 1069.2L2678.1 840.4M1538.4 1090.8L2682.5 862.0M1542.7 1112.4L2686.8 883.5M1547.0 1133.9L2691.1 905.1M1551.3 1155.5L2695.4 926.7M1555.7 1177.1L2699.7 948.3M1560.0 1198.6L2704.0 969.8M1564.3 1220.2L2708.3 991.4M1568.6 1241.8L2712.7 1013.0M1572.9 1263.4L2717.0 1034.5M1577.2 1284.9L2721.3 1056.1M1581.5 1306.5L2725.6 1077.7M1585.9 1328.1L2729.9 1099.3M1590.2 1349.7L2734.2 1120.8M1594.5 1371.2L2738.5 1142.4M1598.8 1392.8L2742.9 1164.0M1603.1 1414.4L2747.2 1185.6" stroke="#4a4a4a" stroke-width="0.9" stroke-opacity="0.9" fill="none"/><line x1="1841" y1="391.3" x2="1897" y2="385.2" stroke="#60f020" stroke-width="2.5" /><line x1="1936.8" y1="381" x2="2045" y2="373" stroke="#60f020" stroke-width="2.5" /><line x1="1841" y1="552.6" x2="1891" y2="550.6" stroke="#60f020" stroke-width="2.5" /><line x1="1936" y1="547" x2="2044" y2="547" stroke="#60f020" stroke-width="2.5" /><line x1="1834" y1="732" x2="1889" y2="730" stroke="#60f020" stroke-width="2.5" /><line x1="1932" y1="726" x2="2043" y2="724" stroke="#60f020" stroke-width="2.5" /><line x1="1780" y1="1065.7" x2="1887.5" y2="1072.8" stroke="#60f020" stroke-width="2.5" /><line x1="1887" y1="1072.6" x2="2040" y2="1085.6" stroke="#60f020" stroke-width="2.5" /><path d="M1634.7 649.8L1673.5 661.2L1711 657.7" stroke="#902020" stroke-width="2" fill="none"/><ellipse cx="2031" cy="366" rx="11" ry="5" fill="none" stroke="#a01818" stroke-width="1"/><ellipse cx="1921" cy="381" rx="11" ry="5" fill="none" stroke="#a01818" stroke-width="1"/><ellipse cx="1590" cy="420" rx="11" ry="5" fill="none" stroke="#a01818" stroke-width="1"/><ellipse cx="1735" cy="403" rx="11" ry="5" fill="none" stroke="#a01818" stroke-width="1"/><path d="M1599 1250L1588 1262M1599 1250L1592 1262M1599 1250L1596 1262M1599 1250L1599 1262M1599 1250L1602 1262M1599 1250L1606 1262M1599 1250L1610 1262" stroke="#ff5020" stroke-width="1.2" fill="none"/><path d="M1691 1206L1680 1218M1691 1206L1684 1218M1691 1206L1688 1218M1691 1206L1691 1218M1691 1206L1694 1218M1691 1206L1698 1218M1691 1206L1702 1218" stroke="#ff5020" stroke-width="1.2" fill="none"/><path d="M1867 1220L1856 1232M1867 1220L1860 1232M1867 1220L1864 1232M1867 1220L1867 1232M1867 1220L1870 1232M1867 1220L1874 1232M1867 1220L1878 1232" stroke="#ff5020" stroke-width="1.2" fill="none"/><path d="M2080 1240L2069 1252M2080 1240L2073 1252M2080 1240L2077 1252M2080 1240L2080 1252M2080 1240L2083 1252M2080 1240L2087 1252M2080 1240L2091 1252" stroke="#ff5020" stroke-width="1.2" fill="none"/><path d="M2143 1170L2132 1182M2143 1170L2136 1182M2143 1170L2140 1182M2143 1170L2143 1182M2143 1170L2146 1182M2143 1170L2150 1182M2143 1170L2154 1182" stroke="#ff5020" stroke-width="1.2" fill="none"/><path d="M1830 1150L1819 1162M1830 1150L1823 1162M1830 1150L1827 1162M1830 1150L1830 1162M1830 1150L1833 1162M1830 1150L1837 1162M1830 1150L1841 1162" stroke="#ff5020" stroke-width="1.2" fill="none"/><path d="M1775.0 1265.0L1769.0 1276.0M1775.0 1265.0L1773.0 1276.0M1775.0 1265.0L1777.0 1276.0M1775.0 1265.0L1781.0 1276.0" stroke="#ff5020" stroke-width="1.1" fill="none"/><path d="M1788.2 1258.5L1782.2 1269.5M1788.2 1258.5L1786.2 1269.5M1788.2 1258.5L1790.2 1269.5M1788.2 1258.5L1794.2 1269.5" stroke="#ff5020" stroke-width="1.1" fill="none"/><path d="M1801.5 1252.0L1795.5 1263.0M1801.5 1252.0L1799.5 1263.0M1801.5 1252.0L1803.5 1263.0M1801.5 1252.0L1807.5 1263.0" stroke="#ff5020" stroke-width="1.1" fill="none"/><path d="M1814.8 1245.5L1808.8 1256.5M1814.8 1245.5L1812.8 1256.5M1814.8 1245.5L1816.8 1256.5M1814.8 1245.5L1820.8 1256.5" stroke="#ff5020" stroke-width="1.1" fill="none"/><path d="M1828.0 1239.0L1822.0 1250.0M1828.0 1239.0L1826.0 1250.0M1828.0 1239.0L1830.0 1250.0M1828.0 1239.0L1834.0 1250.0" stroke="#ff5020" stroke-width="1.1" fill="none"/><path d="M1883.0 1290.0L1877.0 1301.0M1883.0 1290.0L1881.0 1301.0M1883.0 1290.0L1885.0 1301.0M1883.0 1290.0L1889.0 1301.0" stroke="#ff5020" stroke-width="1.1" fill="none"/><path d="M1893.8 1279.2L1887.8 1290.2M1893.8 1279.2L1891.8 1290.2M1893.8 1279.2L1895.8 1290.2M1893.8 1279.2L1899.8 1290.2" stroke="#ff5020" stroke-width="1.1" fill="none"/><path d="M1904.5 1268.5L1898.5 1279.5M1904.5 1268.5L1902.5 1279.5M1904.5 1268.5L1906.5 1279.5M1904.5 1268.5L1910.5 1279.5" stroke="#ff5020" stroke-width="1.1" fill="none"/><path d="M1915.2 1257.8L1909.2 1268.8M1915.2 1257.8L1913.2 1268.8M1915.2 1257.8L1917.2 1268.8M1915.2 1257.8L1921.2 1268.8" stroke="#ff5020" stroke-width="1.1" fill="none"/><path d="M1926.0 1247.0L1920.0 1258.0M1926.0 1247.0L1924.0 1258.0M1926.0 1247.0L1928.0 1258.0M1926.0 1247.0L1932.0 1258.0" stroke="#ff5020" stroke-width="1.1" fill="none"/><path d="M2036.0 1298.0L2030.0 1309.0M2036.0 1298.0L2034.0 1309.0M2036.0 1298.0L2038.0 1309.0M2036.0 1298.0L2042.0 1309.0" stroke="#ff5020" stroke-width="1.1" fill="none"/><path d="M2044.0 1289.0L2038.0 1300.0M2044.0 1289.0L2042.0 1300.0M2044.0 1289.0L2046.0 1300.0M2044.0 1289.0L2050.0 1300.0" stroke="#ff5020" stroke-width="1.1" fill="none"/><path d="M2052.0 1280.0L2046.0 1291.0M2052.0 1280.0L2050.0 1291.0M2052.0 1280.0L2054.0 1291.0M2052.0 1280.0L2058.0 1291.0" stroke="#ff5020" stroke-width="1.1" fill="none"/><path d="M2060.0 1271.0L2054.0 1282.0M2060.0 1271.0L2058.0 1282.0M2060.0 1271.0L2062.0 1282.0M2060.0 1271.0L2066.0 1282.0" stroke="#ff5020" stroke-width="1.1" fill="none"/><path d="M2068.0 1262.0L2062.0 1273.0M2068.0 1262.0L2066.0 1273.0M2068.0 1262.0L2070.0 1273.0M2068.0 1262.0L2074.0 1273.0" stroke="#ff5020" stroke-width="1.1" fill="none"/><path d="M2000.0 1240.0L1994.0 1251.0M2000.0 1240.0L1998.0 1251.0M2000.0 1240.0L2002.0 1251.0M2000.0 1240.0L2006.0 1251.0" stroke="#ff5020" stroke-width="1.1" fill="none"/><path d="M2007.5 1236.2L2001.5 1247.2M2007.5 1236.2L2005.5 1247.2M2007.5 1236.2L2009.5 1247.2M2007.5 1236.2L2013.5 1247.2" stroke="#ff5020" stroke-width="1.1" fill="none"/><path d="M2015.0 1232.5L2009.0 1243.5M2015.0 1232.5L2013.0 1243.5M2015.0 1232.5L2017.0 1243.5M2015.0 1232.5L2021.0 1243.5" stroke="#ff5020" stroke-width="1.1" fill="none"/><path d="M2022.5 1228.8L2016.5 1239.8M2022.5 1228.8L2020.5 1239.8M2022.5 1228.8L2024.5 1239.8M2022.5 1228.8L2028.5 1239.8" stroke="#ff5020" stroke-width="1.1" fill="none"/><path d="M2030.0 1225.0L2024.0 1236.0M2030.0 1225.0L2028.0 1236.0M2030.0 1225.0L2032.0 1236.0M2030.0 1225.0L2036.0 1236.0" stroke="#ff5020" stroke-width="1.1" fill="none"/></svg>
<div class="abs" style="left:0;top:160px;width:144px;height:133px;background:linear-gradient(90deg,#ececec,#f4f4f4);border-top:4px solid #e9ebf0;border-right:3px solid #e6e8ee;box-shadow:1px 1px 2px rgba(0,0,0,.5)"></div>
<div class="abs" style="left:0;top:164px;width:140px;height:34px;background:#b9c0ca"></div>
<div class="abs" style="left:0;top:172px;width:10px;height:24px;overflow:hidden"><div class="ln" style="left:-6px;top:0;font-size:18px">u</div></div>
<div class="abs" style="left:0;top:199px;width:3px;height:94px;background:#fff;border-right:1px solid #cfcfcf"></div>
<div class="abs" style="left:42px;top:199px;width:95px;height:28px;background:#fdfdfd;border-bottom:2px solid #8a8a8a"></div>
<div class="abs" style="left:42px;top:230px;width:95px;height:28px;background:#f6f6f6;border-top:1px solid #e2e2e2"></div>
<div class="ln" style="left:12px;top:204px;">L</div><div class="ln" style="left:12px;top:233px;">A</div><div class="ln" style="left:48.5px;top:204px;">2467.58 cm</div><div class="ln" style="left:48.5px;top:233px;">237.042</div><svg class="abs" style="left:122px;top:175px" width="14" height="13" viewBox="0 0 14 13"><path d="M1.5 1 L12.5 12 M12.5 1 L1.5 12" stroke="#808890" stroke-width="1.6"/></svg><div class="abs" style="left:1288px;top:0;width:5px;height:1371px;background:linear-gradient(90deg,#9a9ca4,#d8dae0 40%,#f4f4f8 60%,#a0a2aa)"></div><div class="abs" style="left:1297px;top:11px;width:38px;height:110px;background:#0c1ea4"></div><div class="abs" style="left:1297px;top:121px;width:38px;height:110px;background:#0000f2"></div><div class="abs" style="left:1297px;top:231px;width:38px;height:110px;background:#0052e6"></div><div class="abs" style="left:1297px;top:1221px;width:38px;height:110px;background:linear-gradient(#b87800,#da9400)"></div><div class="abs" style="left:1297px;top:1331px;width:38px;height:40px;background:linear-gradient(#dc4800,#f25200)"></div><div class="abs" style="left:1336px;top:5.0px;line-height:19px;font-size:17.5px;color:#b8b8b8;white-space:pre;letter-spacing:0.3px">2.2924</div><div class="abs" style="left:1336px;top:115.0px;line-height:19px;font-size:17.5px;color:#b8b8b8;white-space:pre;letter-spacing:0.3px">2.833</div><div class="abs" style="left:1336px;top:225.0px;line-height:19px;font-size:17.5px;color:#b8b8b8;white-space:pre;letter-spacing:0.3px">3.3736</div><div class="abs" style="left:1336px;top:1325.3px;line-height:19px;font-size:17.5px;color:#b8b8b8;white-space:pre;letter-spacing:0.3px">8.7795</div>
<div class="abs" style="left:2255px;top:0;width:16px;height:109px;background:#f0f0f0;border-left:1px solid #a8a8a8;border-bottom:1px solid #d0d0d0"></div>
<div class="abs" style="left:2263px;top:-3px;width:12px;height:20px;border:1px solid #555;border-radius:4px;background:#f6f6f6"></div>
<div class="abs" style="left:2263px;top:24px;width:12px;height:20px;border:1px solid #555;border-radius:4px;background:#f6f6f6"></div>
<div class="abs" style="left:2263px;top:51px;width:10px;height:48px;border:1px solid #222;background:#777"></div>
<div class="abs" style="left:2265px;top:53px;width:2px;height:44px;background:#fff"></div>
<div class="abs" style="left:2266px;top:55px;width:6px;height:2px;background:#f0d020"></div><div class="abs" style="left:2266px;top:64px;width:6px;height:2px;background:#f0d020"></div><div class="abs" style="left:2266px;top:73px;width:6px;height:2px;background:#f0d020"></div><div class="abs" style="left:2266px;top:82px;width:6px;height:2px;background:#f0d020"></div><div class="abs" style="left:2266px;top:91px;width:6px;height:2px;background:#f0d020"></div>
<div class="abs" style="left:20.5px;top:248px;width:1472px;height:1046px;border:1.5px solid rgba(90,90,90,.65);border-radius:9px;background:#f0f0f0;background-clip:padding-box;box-shadow:0 1px 3px rgba(0,0,0,.35);overflow:hidden">
  <div class="abs" style="left:0;top:0;width:1470px;height:43px;background:linear-gradient(90deg,#e3f6f5,#e6f6f2 50%,#eff5ea)"></div>
</div>
<div class="abs" style="left:39px;top:311px;width:1314px;height:884px;background:#fff;border-top:1px solid #e8e8e8;border-left:1px solid #ececec;border-right:1px solid #ececec"></div>
<div class="abs" style="left:39px;top:1194px;width:1314px;height:1px;background:#7c7c7c"></div><div class="abs" style="left:39px;top:1195px;width:1314px;height:1px;background:#c8c8c8"></div>
<div class="abs" style="left:1327px;top:312px;width:25px;height:882px;background:#f0f0f0"></div>
<div class="abs" style="left:1337px;top:1000px;width:5px;height:168px;background:#858585;border-radius:3px"></div>
<div class="abs" style="left:1364px;top:311px;width:110px;height:31px;background:#fdfdfd;border:1px solid #d0d0d0;border-bottom-color:#a8a8a8;border-radius:4px"></div>
<svg class="abs" style="left:1457px;top:261px" width="19" height="19" viewBox="0 0 19 19"><path d="M2 2 L17 17 M17 2 L2 17" stroke="#1a1a1a" stroke-width="1.5"/></svg>
<div class="ln" style="left:34px;top:261.5px;font-size:18px;letter-spacing:-0.119px;">Analiz Durumu</div><div class="ln" style="left:1392px;top:318px;">Tamam</div><div class="ln" style="left:50.5px;top:314px;">0:24</div><div class="ln" style="left:93.5px;top:314px;letter-spacing:0.032px;">Kütle ve rijitlik merkezleri hesaplanıyor.</div><div class="ln" style="left:50.5px;top:333px;">0:24</div><div class="ln" style="left:93.5px;top:333px;letter-spacing:-0.159px;">Betonarme tasarıma başlanıyor.</div><div class="ln" style="left:111px;top:352px;letter-spacing:0.248px;">Adım 1 / 3</div><div class="ln" style="left:111px;top:371px;letter-spacing:0.248px;">Adım 2 / 3</div><div class="ln" style="left:111px;top:390px;letter-spacing:0.248px;">Adım 3 / 3</div><div class="ln" style="left:50.5px;top:409px;">0:24</div><div class="ln" style="left:93.5px;top:409px;letter-spacing:-0.097px;">Betonarme yapılıyor.</div><div class="ln" style="left:111px;top:428px;letter-spacing:0.248px;">Adım 1 / 3</div><div class="ln" style="left:111px;top:447px;letter-spacing:0.248px;">Adım 2 / 3</div><div class="ln" style="left:111px;top:466px;letter-spacing:0.248px;">Adım 3 / 3</div><div class="ln" style="left:50.5px;top:485px;">0:24</div><div class="ln" style="left:93.5px;top:485px;letter-spacing:-0.082px;">Kiriş boyuna donatıları hesaplanıyor.</div><div class="ln" style="left:50.5px;top:504px;">0:24</div><div class="ln" style="left:93.5px;top:504px;letter-spacing:-0.103px;">Kolon enine donatıları hesaplanıyor.</div><div class="ln" style="left:50.5px;top:523px;">0:24</div><div class="ln" style="left:93.5px;top:523px;letter-spacing:-0.152px;">Perde enine donatıları hesaplanıyor.</div><div class="ln" style="left:50.5px;top:542px;">0:25</div><div class="ln" style="left:93.5px;top:542px;letter-spacing:-0.083px;">Burulma donatıları hesaplanıyor.</div><div class="ln" style="left:50.5px;top:561px;">0:25</div><div class="ln" style="left:93.5px;top:561px;letter-spacing:0.048px;">Güçlü kolon zayıf kiriş kontrolü yapılıyor.</div><div class="ln" style="left:50.5px;top:580px;">0:25</div><div class="ln" style="left:93.5px;top:580px;letter-spacing:-0.042px;">TBDY 2018 Madde 7.6.6  - Perdelerin tasarım tesirleri hesaplanıyor.</div><div class="ln" style="left:50.5px;top:599px;">0:25</div><div class="ln" style="left:93.5px;top:599px;">Yapı düzensizlikleri irdeleniyor.</div><div class="ln" style="left:50.5px;top:618px;">0:25</div><div class="ln" style="left:93.5px;top:618px;letter-spacing:0.016px;">Tasarım sonuçları bulunuyor.</div><div class="ln" style="left:50.5px;top:637px;">0:25</div><div class="ln" style="left:93.5px;top:637px;letter-spacing:0.048px;">TS500 6.3.8 - Yeniden dağılım maddesi uygulanıyor.</div><div class="ln" style="left:50.5px;top:656px;">0:25</div><div class="ln" style="left:93.5px;top:656px;letter-spacing:0.033px;">TS500 madde 7.6.2.5  - Kolon burkulma hesabı yapılıyor.</div><div class="ln" style="left:50.5px;top:675px;">0:25</div><div class="ln" style="left:93.5px;top:675px;letter-spacing:-0.03px;">Arttırılmış sonuçlar ile sistem yeniden hesaplanıyor.</div><div class="ln" style="left:111px;top:694px;letter-spacing:0.238px;">Adım 1 / 4</div><div class="ln" style="left:111px;top:713px;letter-spacing:0.238px;">Adım 2 / 4</div><div class="ln" style="left:111px;top:732px;letter-spacing:0.238px;">Adım 3 / 4</div><div class="ln" style="left:111px;top:751px;letter-spacing:-0.014px;">Fiber model kullanılarak perde betonarmesi hesaplanıyor : %100 tamamlandı .</div><div class="ln" style="left:111px;top:770px;letter-spacing:0.238px;">Adım 4 / 4</div><div class="ln" style="left:50.5px;top:789px;">0:25</div><div class="ln" style="left:93.5px;top:789px;letter-spacing:0.048px;">Güçlü kolon zayıf kiriş kontrolü yapılıyor.</div><div class="ln" style="left:111px;top:808px;letter-spacing:0.02px;">Fiber model kullanılarak kolon betonarmesi hesaplanıyor : %100 tamamlandı.</div><div class="ln" style="left:50.5px;top:827px;">0:26</div><div class="ln" style="left:93.5px;top:827px;letter-spacing:0.046px;">Sehim kontrolü için hareketli yükler ile statik analiz yapılıyor.</div><div class="ln" style="left:50.5px;top:846px;">0:26</div><div class="ln" style="left:93.5px;top:846px;letter-spacing:0.036px;">Sehim kontrolü için sabit yükler ile statik analiz yapılıyor.</div><div class="ln" style="left:115.5px;top:865px;">G için toplam kullanılan bellek : 122 MB</div><div class="ln" style="left:115.5px;top:884px;letter-spacing:0.034px;">Q için toplam kullanılan bellek : 122 MB</div><div class="ln" style="left:50.5px;top:903px;">0:27</div><div class="ln" style="left:93.5px;top:903px;letter-spacing:0.022px;">Temel analizi yapılıyor.</div><div class="ln" style="left:50.5px;top:922px;">0:28</div><div class="ln" style="left:93.5px;top:922px;letter-spacing:0.101px;">Temel analizi bitti.</div><div class="ln" style="left:50.5px;top:941px;">0:28</div><div class="ln" style="left:93.5px;top:941px;letter-spacing:-0.329px;">Döşeme analizi.</div><div class="ln" style="left:50.5px;top:960px;">0:28</div><div class="ln" style="left:93.5px;top:960px;letter-spacing:-0.016px;">"1. KAT" döşeme analizi yapılıyor.</div><div class="ln" style="left:50.5px;top:979px;">0:28</div><div class="ln" style="left:93.5px;top:979px;letter-spacing:-0.016px;">"3. KAT" döşeme analizi yapılıyor.</div><div class="ln" style="left:50.5px;top:998px;">0:28</div><div class="ln" style="left:93.5px;top:998px;letter-spacing:-0.016px;">"2. KAT" döşeme analizi yapılıyor.</div><div class="ln" style="left:50.5px;top:1017px;">0:28</div><div class="ln" style="left:93.5px;top:1017px;letter-spacing:-0.038px;">"ÇATI DAİRESİ" döşeme analizi yapılıyor.</div><div class="ln" style="left:50.5px;top:1036px;">0:28</div><div class="ln" style="left:93.5px;top:1036px;letter-spacing:-0.168px;">"1. BODRUM" döşeme analizi yapılıyor.</div><div class="ln" style="left:50.5px;top:1055px;">0:28</div><div class="ln" style="left:93.5px;top:1055px;letter-spacing:-0.099px;">"ZEMİN KAT" döşeme analizi yapılıyor.</div><div class="ln" style="left:50.5px;top:1074px;">0:29</div><div class="ln" style="left:93.5px;top:1074px;letter-spacing:-0.154px;">Betonarme kapasite oranları hesaplanıyor.</div><div class="ln" style="left:111px;top:1093px;letter-spacing:0.018px;">%100 tamamlandı.</div><div class="ln" style="left:50.5px;top:1112px;">0:30</div><div class="ln" style="left:93.5px;top:1112px;letter-spacing:0.205px;">Sonlu eleman kalite ölçütü : Global = 0.766; Minimum = 0.631 (P3 - 3. KAT)</div><div class="ln" style="left:111px;top:1131px;letter-spacing:-0.013px;">Sonlu eleman ağının iyileştirilmesi tavsiye edilir.</div><div class="ln" style="left:50.5px;top:1150px;">0:30</div><div class="ln" style="left:93.5px;top:1150px;letter-spacing:-0.109px;">Analiz tamamlandı.</div><div class="ln" style="left:38px;top:1210.5px;letter-spacing:-0.53px;">Başlangıç zamanı</div><div class="ln" style="left:169.5px;top:1210.5px;">:</div><div class="ln" style="left:184.5px;top:1210.5px;">16:20</div><div class="ln" style="left:319px;top:1210.5px;letter-spacing:-0.205px;">Proje adı</div><div class="ln" style="left:393.5px;top:1210.5px;">:</div><div class="ln" style="left:38px;top:1248.5px;letter-spacing:-0.272px;">Proje dosyası</div><div class="ln" style="left:143px;top:1248.5px;">:</div><div class="ln" style="left:158px;top:1248.5px;letter-spacing:-0.054px;">C:\Gelen Projeler\ANALİZ YAPILAMIYOR.cde</div>
</body></html>
